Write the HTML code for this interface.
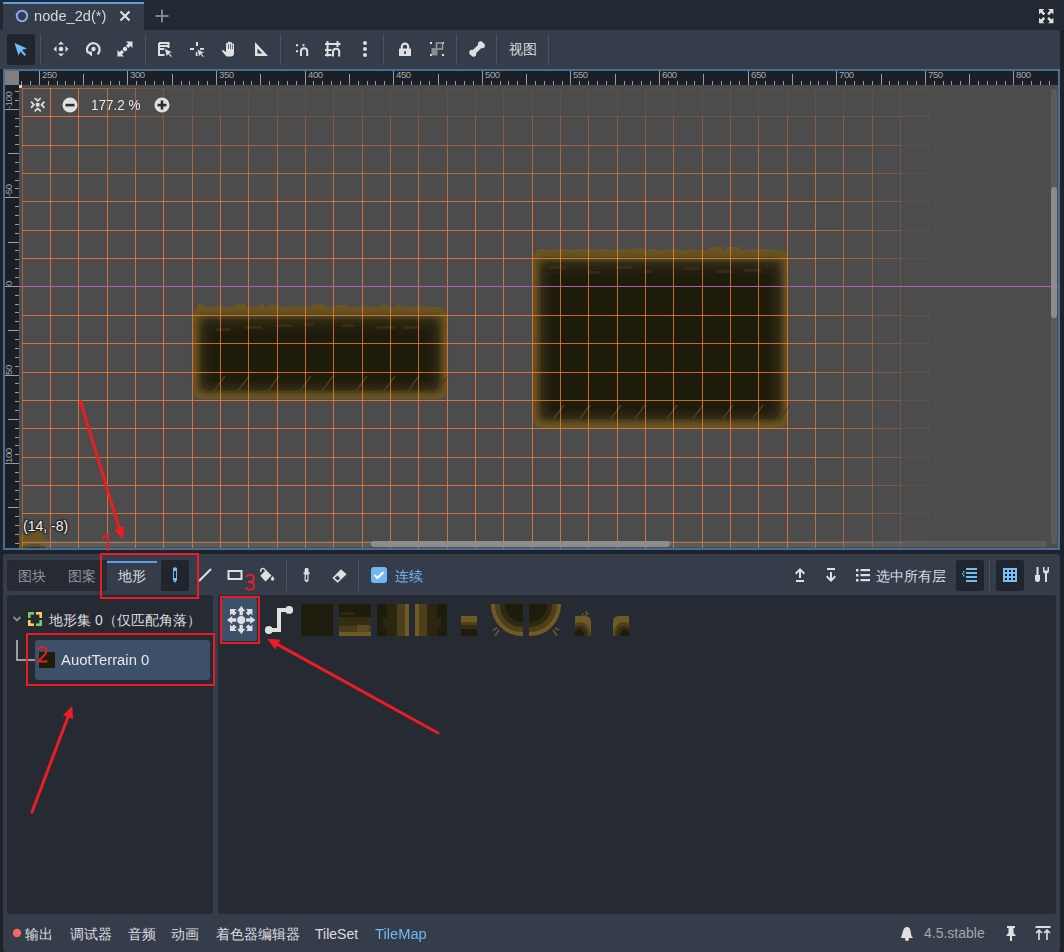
<!DOCTYPE html>
<html><head><meta charset="utf-8"><style>
html,body{margin:0;padding:0;}
body{width:1064px;height:952px;position:relative;overflow:hidden;background:#1e2229;font-family:"Liberation Sans",sans-serif;}
.t{position:absolute;white-space:nowrap;line-height:1.2;}
svg{overflow:visible}
</style></head><body>
<div style="position:absolute;left:0px;top:0px;width:1064px;height:30px;background:#232933;border-radius:0px;"></div><div style="position:absolute;left:3px;top:2px;width:141px;height:28px;background:#363d4a;border-radius:0px;"></div><div style="position:absolute;left:3px;top:2px;width:141px;height:2px;background:#5f9ee8;border-radius:0px;"></div><svg style="position:absolute;left:14px;top:8px" width="16" height="16" viewBox="0 0 16 16" ><circle cx="8" cy="8" r="5.2" fill="none" stroke="#8da5f3" stroke-width="2"/></svg><div class="t" style="left:34px;top:8px;font-size:14px;color:#d6d8db;transform:scaleX(1.045);transform-origin:0 0;">node_2d(*)</div><svg style="position:absolute;left:118px;top:9px" width="14" height="14" viewBox="0 0 14 14" ><path d="M2.5 2.5 L11.5 11.5 M11.5 2.5 L2.5 11.5" stroke="#e0e0e0" stroke-width="2" stroke-linecap="butt"/></svg><svg style="position:absolute;left:154px;top:8px" width="16" height="16" viewBox="0 0 16 16" ><path d="M8 1.5 V14.5 M1.5 8 H14.5" stroke="#808389" stroke-width="2"/></svg><svg style="position:absolute;left:1039px;top:9px" width="14" height="14" viewBox="0 0 14 14" ><g fill="#e0e0e0"><polygon points="0,0 5.4,0 3.6,1.8 6.2,4.4 4.4,6.2 1.8,3.6 0,5.4"/><polygon transform="translate(14.4,0) scale(-1,1)" points="0,0 5.4,0 3.6,1.8 6.2,4.4 4.4,6.2 1.8,3.6 0,5.4"/><polygon transform="translate(0,14.2) scale(1,-1)" points="0,0 5.4,0 3.6,1.8 6.2,4.4 4.4,6.2 1.8,3.6 0,5.4"/><polygon transform="translate(14.4,14.2) scale(-1,-1)" points="0,0 5.4,0 3.6,1.8 6.2,4.4 4.4,6.2 1.8,3.6 0,5.4"/></g></svg><div style="position:absolute;left:0px;top:30px;width:1060px;height:39px;background:#363d4a;border-radius:0px;"></div><div style="position:absolute;left:7px;top:34px;width:28px;height:31px;background:#21262e;border-radius:3px;"></div><svg style="position:absolute;left:12px;top:40px" width="18" height="18" viewBox="0 0 18 18" ><path d="M2.5 3 L15 8.5 L10 10 L14 14.5 L12.5 16 L8.5 11.5 L6.5 15.5 Z" fill="#70bdf8"/></svg><div style="position:absolute;left:40px;top:34px;width:1px;height:31px;background:#4a5161"></div><div style="position:absolute;left:145px;top:34px;width:1px;height:31px;background:#4a5161"></div><div style="position:absolute;left:280px;top:34px;width:1px;height:31px;background:#4a5161"></div><div style="position:absolute;left:383px;top:34px;width:1px;height:31px;background:#4a5161"></div><div style="position:absolute;left:456px;top:34px;width:1px;height:31px;background:#4a5161"></div><div style="position:absolute;left:496px;top:34px;width:1px;height:31px;background:#4a5161"></div><div style="position:absolute;left:548px;top:34px;width:1px;height:31px;background:#4a5161"></div><svg style="position:absolute;left:52px;top:40px" width="18" height="18" viewBox="0 0 18 18" ><g fill="#e0e0e0"><circle cx="9" cy="9" r="2.3"/><path d="M9 1.5 L12 4.5 H6 Z M9 16.5 L12 13.5 H6 Z M1.5 9 L4.5 6 V12 Z M16.5 9 L13.5 6 V12 Z"/></g></svg><svg style="position:absolute;left:84px;top:40px" width="18" height="18" viewBox="0 0 18 18" ><path d="M4.2 13.2 A6.3 6.3 0 1 1 13.5 14.2" fill="none" stroke="#e0e0e0" stroke-width="2.2"/><circle cx="9.5" cy="9" r="2.2" fill="#e0e0e0"/><path d="M2 11.5 L8 11.5 L8 16.5 Z" fill="#e0e0e0"/></svg><svg style="position:absolute;left:116px;top:40px" width="18" height="18" viewBox="0 0 18 18" ><g fill="#e0e0e0"><circle cx="9" cy="9" r="2.2"/><path d="M10 1.5 H16.5 V8 L14.4 5.9 L12.3 8 L10 5.7 L12.1 3.6 Z M8 16.5 H1.5 V10 L3.6 12.1 L5.7 10 L8 12.3 L5.9 14.4 Z"/></g></svg><svg style="position:absolute;left:156px;top:40px" width="18" height="18" viewBox="0 0 18 18" ><path d="M3 3 H12.5 V8 M3 3 V15 H8.5 M3 9 H9 M3 6 H12" fill="none" stroke="#e0e0e0" stroke-width="2"/><path d="M8.3 8.3 L17 12.2 L13.6 13.2 L16.3 16.2 L15 17.4 L12.3 14.4 L10.6 17 Z" fill="#e0e0e0" stroke="#363d4a" stroke-width="0.8"/></svg><svg style="position:absolute;left:188px;top:40px" width="18" height="18" viewBox="0 0 18 18" ><g fill="#e0e0e0"><rect x="8" y="2" width="2" height="4"/><rect x="2" y="8" width="4" height="2"/><rect x="12" y="8" width="4" height="1.8"/><rect x="7.8" y="12" width="1.8" height="4"/></g><path d="M9 9 L17 12.6 L13.8 13.6 L16.3 16.4 L15.1 17.5 L12.6 14.7 L11 17.2 Z" fill="#e0e0e0" stroke="#363d4a" stroke-width="0.8"/></svg><svg style="position:absolute;left:220px;top:40px" width="18" height="18" viewBox="0 0 18 18" ><path d="M6.5 16.5 L2 11.3 Q1.6 10 3 10 L6 12 V4 Q6 2.8 7 2.8 Q8 2.8 8 4 V9 V2.5 Q8 1.5 9 1.5 Q10 1.5 10 2.5 V9 V3 Q10 2 11 2 Q12 2 12 3 V9 V4.5 Q12 3.5 13 3.5 Q14 3.5 14 4.5 V13 Q14 16.5 11 16.5 Z" fill="#e0e0e0"/><path d="M8.5 9 V4 M10.5 9 V4 M12.5 9 V5" stroke="#363d4a" stroke-width="0.7"/></svg><svg style="position:absolute;left:252px;top:40px" width="18" height="18" viewBox="0 0 18 18" ><path d="M3 2 V16 H16 Z M5.5 8.5 V13.5 H10.5 Z" fill="#e0e0e0" fill-rule="evenodd"/></svg><svg style="position:absolute;left:292px;top:40px" width="18" height="18" viewBox="0 0 18 18" ><g fill="#e0e0e0"><rect x="4" y="4.2" width="2" height="2"/><rect x="10.5" y="4.2" width="2" height="2"/><rect x="4" y="10.2" width="2" height="2"/></g><path d="M9 16 V11.3 A3.1 3.1 0 0 1 15.2 11.3 V16" fill="none" stroke="#e0e0e0" stroke-width="2"/></svg><svg style="position:absolute;left:324px;top:40px" width="18" height="18" viewBox="0 0 18 18" ><g fill="#e0e0e0"><rect x="2.5" y="1" width="2" height="15.5"/><rect x="12.5" y="1" width="2" height="6"/><rect x="1" y="3" width="15.5" height="2"/><rect x="1" y="9" width="6.5" height="2"/><rect x="1" y="14" width="6.5" height="2"/></g><path d="M9 16.5 V11.8 A3.1 3.1 0 0 1 15.2 11.8 V16.5" fill="none" stroke="#e0e0e0" stroke-width="2"/></svg><svg style="position:absolute;left:356px;top:40px" width="18" height="18" viewBox="0 0 18 18" ><g fill="#e0e0e0"><circle cx="9" cy="3" r="2"/><circle cx="9" cy="9" r="2"/><circle cx="9" cy="15" r="2"/></g></svg><svg style="position:absolute;left:396px;top:40px" width="18" height="18" viewBox="0 0 18 18" ><path d="M5.8 9 V6.8 A3.2 3.2 0 0 1 12.2 6.8 V9" fill="none" stroke="#e0e0e0" stroke-width="2.2"/><rect x="3" y="8.5" width="12" height="7.5" rx="0.5" fill="#e0e0e0"/><rect x="8.2" y="11" width="1.6" height="3" fill="#363d4a"/></svg><svg style="position:absolute;left:428px;top:40px" width="18" height="18" viewBox="0 0 18 18" ><g fill="#e0e0e0"><rect x="2" y="2" width="2" height="2"/><rect x="14" y="2" width="2" height="2"/><rect x="2" y="14" width="2" height="2"/><rect x="14" y="14" width="2" height="2"/></g><rect x="8.5" y="3" width="6" height="6" fill="none" stroke="#9a9a9a" stroke-width="1.6"/><rect x="3.5" y="8" width="6" height="7.5" fill="#8c8c8c"/></svg><svg style="position:absolute;left:468px;top:40px" width="18" height="18" viewBox="0 0 18 18" ><g fill="#e0e0e0"><circle cx="12.6" cy="3.9" r="2.6"/><circle cx="14.3" cy="5.6" r="2.6"/><circle cx="3.9" cy="12.4" r="2.6"/><circle cx="5.6" cy="14.1" r="2.6"/><path d="M10.8 4.2 L14 7.4 L7.2 14 L4 10.8 Z"/></g></svg><div class="t" style="left:509px;top:41px;font-size:14px;color:#d8dadd;">视图</div><div style="position:absolute;left:3px;top:69px;width:1057px;height:481px;background:#486e94;border-radius:0px;"></div><div style="position:absolute;left:5px;top:71px;width:1053px;height:477px;background:#4c4c4c;border-radius:0px;"></div><svg style="position:absolute;left:0;top:0" width="1064" height="952"><defs><clipPath id="vc"><rect x="19" y="85" width="1039" height="463"/></clipPath></defs><g clip-path="url(#vc)"><defs><filter id="bl2" x="-20%" y="-20%" width="140%" height="140%"><feGaussianBlur stdDeviation="2.5"/></filter><filter id="bl3" x="-20%" y="-20%" width="140%" height="140%"><feGaussianBlur stdDeviation="3.5"/></filter></defs><g transform="translate(193,307)"><rect x="0" y="0" width="254" height="92" rx="9" fill="#6b5523"/><rect x="4" y="-3" width="7" height="5" fill="#6b5523"/><rect x="23" y="-2" width="6" height="4" fill="#6b5523"/><rect x="42" y="-3" width="11" height="5" fill="#6b5523"/><rect x="66" y="-3" width="5" height="5" fill="#6b5523"/><rect x="75" y="-2" width="11" height="4" fill="#6b5523"/><rect x="98" y="-1" width="7" height="3" fill="#6b5523"/><rect x="120" y="-3" width="11" height="5" fill="#6b5523"/><rect x="143" y="-2" width="11" height="4" fill="#6b5523"/><rect x="168" y="-1" width="6" height="3" fill="#6b5523"/><rect x="188" y="-3" width="6" height="5" fill="#6b5523"/><rect x="204" y="-3" width="4" height="5" fill="#6b5523"/><rect x="224" y="-1" width="5" height="3" fill="#6b5523"/><rect x="4" y="7" width="246" height="79" rx="7" fill="#4c3f1b" filter="url(#bl2)"/><rect x="8" y="12" width="238" height="71" rx="7" fill="#2f2912" filter="url(#bl2)"/><rect x="13" y="18" width="228" height="60" rx="6" fill="#201e0d" filter="url(#bl3)"/><rect x="18" y="24" width="218" height="50" fill="#1e1d0c"/><path d="M21 84 L32 69" stroke="#4c3f1b" stroke-width="1.5"/><path d="M45 84 L56 69" stroke="#4c3f1b" stroke-width="1.5"/><path d="M75 84 L86 69" stroke="#4c3f1b" stroke-width="1.5"/><path d="M107 84 L118 69" stroke="#4c3f1b" stroke-width="1.5"/><path d="M129 84 L140 69" stroke="#4c3f1b" stroke-width="1.5"/><path d="M163 84 L174 69" stroke="#4c3f1b" stroke-width="1.5"/><path d="M191 84 L202 69" stroke="#4c3f1b" stroke-width="1.5"/><path d="M215 84 L226 69" stroke="#4c3f1b" stroke-width="1.5"/><path d="M244 84 L255 69" stroke="#4c3f1b" stroke-width="1.5"/><rect x="23" y="21" width="14" height="3" fill="#3a3115" opacity="0.8"/><rect x="52" y="19" width="17" height="3" fill="#3a3115" opacity="0.8"/><rect x="85" y="17" width="13" height="3" fill="#3a3115" opacity="0.8"/><rect x="111" y="16" width="10" height="3" fill="#3a3115" opacity="0.8"/><rect x="149" y="17" width="12" height="3" fill="#3a3115" opacity="0.8"/><rect x="184" y="19" width="18" height="3" fill="#3a3115" opacity="0.8"/><rect x="210" y="19" width="16" height="3" fill="#3a3115" opacity="0.8"/></g><g transform="translate(533,250)"><rect x="0" y="0" width="255" height="178" rx="9" fill="#6b5523"/><rect x="4" y="-1" width="9" height="3" fill="#6b5523"/><rect x="23" y="-1" width="14" height="3" fill="#6b5523"/><rect x="42" y="-1" width="12" height="3" fill="#6b5523"/><rect x="63" y="-1" width="13" height="3" fill="#6b5523"/><rect x="88" y="-1" width="7" height="3" fill="#6b5523"/><rect x="100" y="-2" width="10" height="4" fill="#6b5523"/><rect x="115" y="-1" width="7" height="3" fill="#6b5523"/><rect x="134" y="-1" width="10" height="3" fill="#6b5523"/><rect x="157" y="-1" width="5" height="3" fill="#6b5523"/><rect x="176" y="-3" width="14" height="5" fill="#6b5523"/><rect x="194" y="-3" width="13" height="5" fill="#6b5523"/><rect x="217" y="-1" width="4" height="3" fill="#6b5523"/><rect x="225" y="-1" width="12" height="3" fill="#6b5523"/><rect x="4" y="7" width="247" height="165" rx="7" fill="#4c3f1b" filter="url(#bl2)"/><rect x="8" y="12" width="239" height="157" rx="7" fill="#2f2912" filter="url(#bl2)"/><rect x="13" y="18" width="229" height="146" rx="6" fill="#201e0d" filter="url(#bl3)"/><rect x="18" y="24" width="219" height="136" fill="#1e1d0c"/><path d="M20 170 L31 155" stroke="#4c3f1b" stroke-width="1.5"/><path d="M46 170 L57 155" stroke="#4c3f1b" stroke-width="1.5"/><path d="M77 170 L88 155" stroke="#4c3f1b" stroke-width="1.5"/><path d="M101 170 L112 155" stroke="#4c3f1b" stroke-width="1.5"/><path d="M133 170 L144 155" stroke="#4c3f1b" stroke-width="1.5"/><path d="M159 170 L170 155" stroke="#4c3f1b" stroke-width="1.5"/><path d="M189 170 L200 155" stroke="#4c3f1b" stroke-width="1.5"/><path d="M219 170 L230 155" stroke="#4c3f1b" stroke-width="1.5"/><path d="M246 170 L257 155" stroke="#4c3f1b" stroke-width="1.5"/><rect x="16" y="16" width="17" height="3" fill="#3a3115" opacity="0.8"/><rect x="55" y="21" width="11" height="3" fill="#3a3115" opacity="0.8"/><rect x="83" y="16" width="16" height="3" fill="#3a3115" opacity="0.8"/><rect x="111" y="20" width="8" height="3" fill="#3a3115" opacity="0.8"/><rect x="151" y="17" width="15" height="3" fill="#3a3115" opacity="0.8"/><rect x="184" y="20" width="14" height="3" fill="#3a3115" opacity="0.8"/><rect x="211" y="19" width="17" height="3" fill="#3a3115" opacity="0.8"/></g><polygon points="19,534.5 29,535.5 34,533.5 39,530 45.5,527 47,528.5 41.5,533 43.5,537.5 49,540.5 49.5,548 19,548" fill="#6b5523"/><ellipse cx="34" cy="549" rx="13" ry="5" fill="#45391a"/><ellipse cx="34" cy="550" rx="9" ry="3" fill="#2f2912"/><g fill="#ff8033" shape-rendering="crispEdges"><rect x="22" y="88" width="29" height="1" fill-opacity="0.500"/><rect x="22" y="116" width="29" height="1" fill-opacity="0.750"/><rect x="22" y="89" width="1" height="27" fill-opacity="0.500"/><rect x="50" y="89" width="1" height="27" fill-opacity="0.750"/><rect x="22" y="145" width="29" height="1" fill-opacity="0.746"/><rect x="22" y="117" width="1" height="28" fill-opacity="0.500"/><rect x="50" y="117" width="1" height="28" fill-opacity="0.750"/><rect x="22" y="173" width="29" height="1" fill-opacity="0.699"/><rect x="22" y="146" width="1" height="27" fill-opacity="0.492"/><rect x="50" y="146" width="1" height="27" fill-opacity="0.711"/><rect x="22" y="201" width="29" height="1" fill-opacity="0.704"/><rect x="22" y="174" width="1" height="27" fill-opacity="0.407"/><rect x="50" y="174" width="1" height="27" fill-opacity="0.649"/><rect x="22" y="230" width="29" height="1" fill-opacity="0.750"/><rect x="22" y="202" width="1" height="28" fill-opacity="0.500"/><rect x="50" y="202" width="1" height="28" fill-opacity="0.750"/><rect x="22" y="258" width="29" height="1" fill-opacity="0.750"/><rect x="22" y="231" width="1" height="27" fill-opacity="0.500"/><rect x="50" y="231" width="1" height="27" fill-opacity="0.750"/><rect x="22" y="286" width="29" height="1" fill-opacity="0.750"/><rect x="22" y="259" width="1" height="27" fill-opacity="0.500"/><rect x="50" y="259" width="1" height="27" fill-opacity="0.750"/><rect x="22" y="315" width="29" height="1" fill-opacity="0.750"/><rect x="22" y="287" width="1" height="28" fill-opacity="0.500"/><rect x="50" y="287" width="1" height="28" fill-opacity="0.750"/><rect x="22" y="343" width="29" height="1" fill-opacity="0.750"/><rect x="22" y="316" width="1" height="27" fill-opacity="0.500"/><rect x="50" y="316" width="1" height="27" fill-opacity="0.750"/><rect x="22" y="372" width="29" height="1" fill-opacity="0.750"/><rect x="22" y="344" width="1" height="28" fill-opacity="0.500"/><rect x="50" y="344" width="1" height="28" fill-opacity="0.750"/><rect x="22" y="400" width="29" height="1" fill-opacity="0.750"/><rect x="22" y="373" width="1" height="27" fill-opacity="0.500"/><rect x="50" y="373" width="1" height="27" fill-opacity="0.750"/><rect x="22" y="428" width="29" height="1" fill-opacity="0.750"/><rect x="22" y="401" width="1" height="27" fill-opacity="0.500"/><rect x="50" y="401" width="1" height="27" fill-opacity="0.750"/><rect x="22" y="457" width="29" height="1" fill-opacity="0.750"/><rect x="22" y="429" width="1" height="28" fill-opacity="0.500"/><rect x="50" y="429" width="1" height="28" fill-opacity="0.750"/><rect x="22" y="485" width="29" height="1" fill-opacity="0.750"/><rect x="22" y="458" width="1" height="27" fill-opacity="0.500"/><rect x="50" y="458" width="1" height="27" fill-opacity="0.750"/><rect x="22" y="513" width="29" height="1" fill-opacity="0.750"/><rect x="22" y="486" width="1" height="27" fill-opacity="0.500"/><rect x="50" y="486" width="1" height="27" fill-opacity="0.750"/><rect x="22" y="542" width="29" height="1" fill-opacity="0.750"/><rect x="22" y="514" width="1" height="28" fill-opacity="0.500"/><rect x="50" y="514" width="1" height="28" fill-opacity="0.750"/><rect x="22" y="570" width="29" height="1" fill-opacity="0.750"/><rect x="22" y="543" width="1" height="27" fill-opacity="0.500"/><rect x="50" y="543" width="1" height="27" fill-opacity="0.750"/><rect x="22" y="599" width="29" height="1" fill-opacity="0.500"/><rect x="22" y="571" width="1" height="28" fill-opacity="0.500"/><rect x="50" y="571" width="1" height="28" fill-opacity="0.750"/><rect x="50" y="88" width="29" height="1" fill-opacity="0.500"/><rect x="50" y="116" width="29" height="1" fill-opacity="0.750"/><rect x="78" y="89" width="1" height="27" fill-opacity="0.746"/><rect x="50" y="145" width="29" height="1" fill-opacity="0.715"/><rect x="78" y="117" width="1" height="28" fill-opacity="0.715"/><rect x="50" y="173" width="29" height="1" fill-opacity="0.663"/><rect x="78" y="146" width="1" height="27" fill-opacity="0.617"/><rect x="50" y="201" width="29" height="1" fill-opacity="0.704"/><rect x="78" y="174" width="1" height="27" fill-opacity="0.649"/><rect x="50" y="230" width="29" height="1" fill-opacity="0.750"/><rect x="78" y="202" width="1" height="28" fill-opacity="0.750"/><rect x="50" y="258" width="29" height="1" fill-opacity="0.750"/><rect x="78" y="231" width="1" height="27" fill-opacity="0.750"/><rect x="50" y="286" width="29" height="1" fill-opacity="0.750"/><rect x="78" y="259" width="1" height="27" fill-opacity="0.750"/><rect x="50" y="315" width="29" height="1" fill-opacity="0.750"/><rect x="78" y="287" width="1" height="28" fill-opacity="0.750"/><rect x="50" y="343" width="29" height="1" fill-opacity="0.750"/><rect x="78" y="316" width="1" height="27" fill-opacity="0.750"/><rect x="50" y="372" width="29" height="1" fill-opacity="0.750"/><rect x="78" y="344" width="1" height="28" fill-opacity="0.750"/><rect x="50" y="400" width="29" height="1" fill-opacity="0.750"/><rect x="78" y="373" width="1" height="27" fill-opacity="0.750"/><rect x="50" y="428" width="29" height="1" fill-opacity="0.750"/><rect x="78" y="401" width="1" height="27" fill-opacity="0.750"/><rect x="50" y="457" width="29" height="1" fill-opacity="0.750"/><rect x="78" y="429" width="1" height="28" fill-opacity="0.750"/><rect x="50" y="485" width="29" height="1" fill-opacity="0.750"/><rect x="78" y="458" width="1" height="27" fill-opacity="0.750"/><rect x="50" y="513" width="29" height="1" fill-opacity="0.750"/><rect x="78" y="486" width="1" height="27" fill-opacity="0.750"/><rect x="50" y="542" width="29" height="1" fill-opacity="0.750"/><rect x="78" y="514" width="1" height="28" fill-opacity="0.750"/><rect x="50" y="570" width="29" height="1" fill-opacity="0.750"/><rect x="78" y="543" width="1" height="27" fill-opacity="0.750"/><rect x="50" y="599" width="29" height="1" fill-opacity="0.500"/><rect x="78" y="571" width="1" height="28" fill-opacity="0.750"/><rect x="78" y="88" width="30" height="1" fill-opacity="0.492"/><rect x="78" y="116" width="30" height="1" fill-opacity="0.711"/><rect x="107" y="89" width="1" height="27" fill-opacity="0.658"/><rect x="78" y="145" width="30" height="1" fill-opacity="0.617"/><rect x="107" y="117" width="1" height="28" fill-opacity="0.591"/><rect x="78" y="173" width="30" height="1" fill-opacity="0.601"/><rect x="107" y="146" width="1" height="27" fill-opacity="0.521"/><rect x="78" y="201" width="30" height="1" fill-opacity="0.704"/><rect x="107" y="174" width="1" height="27" fill-opacity="0.649"/><rect x="78" y="230" width="30" height="1" fill-opacity="0.750"/><rect x="107" y="202" width="1" height="28" fill-opacity="0.750"/><rect x="78" y="258" width="30" height="1" fill-opacity="0.750"/><rect x="107" y="231" width="1" height="27" fill-opacity="0.750"/><rect x="78" y="286" width="30" height="1" fill-opacity="0.750"/><rect x="107" y="259" width="1" height="27" fill-opacity="0.750"/><rect x="78" y="315" width="30" height="1" fill-opacity="0.750"/><rect x="107" y="287" width="1" height="28" fill-opacity="0.750"/><rect x="78" y="343" width="30" height="1" fill-opacity="0.750"/><rect x="107" y="316" width="1" height="27" fill-opacity="0.750"/><rect x="78" y="372" width="30" height="1" fill-opacity="0.750"/><rect x="107" y="344" width="1" height="28" fill-opacity="0.750"/><rect x="78" y="400" width="30" height="1" fill-opacity="0.750"/><rect x="107" y="373" width="1" height="27" fill-opacity="0.750"/><rect x="78" y="428" width="30" height="1" fill-opacity="0.750"/><rect x="107" y="401" width="1" height="27" fill-opacity="0.750"/><rect x="78" y="457" width="30" height="1" fill-opacity="0.750"/><rect x="107" y="429" width="1" height="28" fill-opacity="0.750"/><rect x="78" y="485" width="30" height="1" fill-opacity="0.750"/><rect x="107" y="458" width="1" height="27" fill-opacity="0.750"/><rect x="78" y="513" width="30" height="1" fill-opacity="0.750"/><rect x="107" y="486" width="1" height="27" fill-opacity="0.750"/><rect x="78" y="542" width="30" height="1" fill-opacity="0.750"/><rect x="107" y="514" width="1" height="28" fill-opacity="0.750"/><rect x="78" y="570" width="30" height="1" fill-opacity="0.750"/><rect x="107" y="543" width="1" height="27" fill-opacity="0.750"/><rect x="78" y="599" width="30" height="1" fill-opacity="0.500"/><rect x="107" y="571" width="1" height="28" fill-opacity="0.750"/><rect x="107" y="88" width="29" height="1" fill-opacity="0.327"/><rect x="107" y="116" width="29" height="1" fill-opacity="0.517"/><rect x="135" y="89" width="1" height="27" fill-opacity="0.436"/><rect x="107" y="145" width="29" height="1" fill-opacity="0.489"/><rect x="135" y="117" width="1" height="28" fill-opacity="0.403"/><rect x="107" y="173" width="29" height="1" fill-opacity="0.578"/><rect x="135" y="146" width="1" height="27" fill-opacity="0.493"/><rect x="107" y="201" width="29" height="1" fill-opacity="0.704"/><rect x="135" y="174" width="1" height="27" fill-opacity="0.649"/><rect x="107" y="230" width="29" height="1" fill-opacity="0.750"/><rect x="135" y="202" width="1" height="28" fill-opacity="0.750"/><rect x="107" y="258" width="29" height="1" fill-opacity="0.750"/><rect x="135" y="231" width="1" height="27" fill-opacity="0.750"/><rect x="107" y="286" width="29" height="1" fill-opacity="0.750"/><rect x="135" y="259" width="1" height="27" fill-opacity="0.750"/><rect x="107" y="315" width="29" height="1" fill-opacity="0.750"/><rect x="135" y="287" width="1" height="28" fill-opacity="0.750"/><rect x="107" y="343" width="29" height="1" fill-opacity="0.750"/><rect x="135" y="316" width="1" height="27" fill-opacity="0.750"/><rect x="107" y="372" width="29" height="1" fill-opacity="0.750"/><rect x="135" y="344" width="1" height="28" fill-opacity="0.750"/><rect x="107" y="400" width="29" height="1" fill-opacity="0.750"/><rect x="135" y="373" width="1" height="27" fill-opacity="0.750"/><rect x="107" y="428" width="29" height="1" fill-opacity="0.750"/><rect x="135" y="401" width="1" height="27" fill-opacity="0.750"/><rect x="107" y="457" width="29" height="1" fill-opacity="0.750"/><rect x="135" y="429" width="1" height="28" fill-opacity="0.750"/><rect x="107" y="485" width="29" height="1" fill-opacity="0.750"/><rect x="135" y="458" width="1" height="27" fill-opacity="0.750"/><rect x="107" y="513" width="29" height="1" fill-opacity="0.750"/><rect x="135" y="486" width="1" height="27" fill-opacity="0.750"/><rect x="107" y="542" width="29" height="1" fill-opacity="0.750"/><rect x="135" y="514" width="1" height="28" fill-opacity="0.750"/><rect x="107" y="570" width="29" height="1" fill-opacity="0.750"/><rect x="135" y="543" width="1" height="27" fill-opacity="0.750"/><rect x="107" y="599" width="29" height="1" fill-opacity="0.500"/><rect x="135" y="571" width="1" height="28" fill-opacity="0.750"/><rect x="135" y="88" width="29" height="1" fill-opacity="0.162"/><rect x="135" y="116" width="29" height="1" fill-opacity="0.304"/><rect x="163" y="89" width="1" height="27" fill-opacity="0.204"/><rect x="135" y="145" width="29" height="1" fill-opacity="0.408"/><rect x="163" y="117" width="1" height="28" fill-opacity="0.310"/><rect x="135" y="173" width="29" height="1" fill-opacity="0.578"/><rect x="163" y="146" width="1" height="27" fill-opacity="0.493"/><rect x="135" y="201" width="29" height="1" fill-opacity="0.704"/><rect x="163" y="174" width="1" height="27" fill-opacity="0.649"/><rect x="135" y="230" width="29" height="1" fill-opacity="0.750"/><rect x="163" y="202" width="1" height="28" fill-opacity="0.750"/><rect x="135" y="258" width="29" height="1" fill-opacity="0.750"/><rect x="163" y="231" width="1" height="27" fill-opacity="0.750"/><rect x="135" y="286" width="29" height="1" fill-opacity="0.750"/><rect x="163" y="259" width="1" height="27" fill-opacity="0.750"/><rect x="135" y="315" width="29" height="1" fill-opacity="0.750"/><rect x="163" y="287" width="1" height="28" fill-opacity="0.750"/><rect x="135" y="343" width="29" height="1" fill-opacity="0.750"/><rect x="163" y="316" width="1" height="27" fill-opacity="0.750"/><rect x="135" y="372" width="29" height="1" fill-opacity="0.750"/><rect x="163" y="344" width="1" height="28" fill-opacity="0.750"/><rect x="135" y="400" width="29" height="1" fill-opacity="0.750"/><rect x="163" y="373" width="1" height="27" fill-opacity="0.750"/><rect x="135" y="428" width="29" height="1" fill-opacity="0.750"/><rect x="163" y="401" width="1" height="27" fill-opacity="0.750"/><rect x="135" y="457" width="29" height="1" fill-opacity="0.750"/><rect x="163" y="429" width="1" height="28" fill-opacity="0.750"/><rect x="135" y="485" width="29" height="1" fill-opacity="0.750"/><rect x="163" y="458" width="1" height="27" fill-opacity="0.750"/><rect x="135" y="513" width="29" height="1" fill-opacity="0.750"/><rect x="163" y="486" width="1" height="27" fill-opacity="0.750"/><rect x="135" y="542" width="29" height="1" fill-opacity="0.750"/><rect x="163" y="514" width="1" height="28" fill-opacity="0.750"/><rect x="135" y="570" width="29" height="1" fill-opacity="0.750"/><rect x="163" y="543" width="1" height="27" fill-opacity="0.750"/><rect x="135" y="599" width="29" height="1" fill-opacity="0.500"/><rect x="163" y="571" width="1" height="28" fill-opacity="0.750"/><rect x="163" y="88" width="30" height="1" fill-opacity="0.050"/><rect x="163" y="116" width="30" height="1" fill-opacity="0.211"/><rect x="192" y="89" width="1" height="27" fill-opacity="0.098"/><rect x="163" y="145" width="30" height="1" fill-opacity="0.408"/><rect x="192" y="117" width="1" height="28" fill-opacity="0.310"/><rect x="163" y="173" width="30" height="1" fill-opacity="0.578"/><rect x="192" y="146" width="1" height="27" fill-opacity="0.493"/><rect x="163" y="201" width="30" height="1" fill-opacity="0.704"/><rect x="192" y="174" width="1" height="27" fill-opacity="0.649"/><rect x="163" y="230" width="30" height="1" fill-opacity="0.750"/><rect x="192" y="202" width="1" height="28" fill-opacity="0.750"/><rect x="163" y="258" width="30" height="1" fill-opacity="0.750"/><rect x="192" y="231" width="1" height="27" fill-opacity="0.750"/><rect x="163" y="286" width="30" height="1" fill-opacity="0.750"/><rect x="192" y="259" width="1" height="27" fill-opacity="0.750"/><rect x="163" y="315" width="30" height="1" fill-opacity="0.750"/><rect x="192" y="287" width="1" height="28" fill-opacity="0.750"/><rect x="163" y="343" width="30" height="1" fill-opacity="0.750"/><rect x="192" y="316" width="1" height="27" fill-opacity="0.750"/><rect x="163" y="372" width="30" height="1" fill-opacity="0.750"/><rect x="192" y="344" width="1" height="28" fill-opacity="0.750"/><rect x="163" y="400" width="30" height="1" fill-opacity="0.750"/><rect x="192" y="373" width="1" height="27" fill-opacity="0.750"/><rect x="163" y="428" width="30" height="1" fill-opacity="0.750"/><rect x="192" y="401" width="1" height="27" fill-opacity="0.750"/><rect x="163" y="457" width="30" height="1" fill-opacity="0.750"/><rect x="192" y="429" width="1" height="28" fill-opacity="0.750"/><rect x="163" y="485" width="30" height="1" fill-opacity="0.750"/><rect x="192" y="458" width="1" height="27" fill-opacity="0.750"/><rect x="163" y="513" width="30" height="1" fill-opacity="0.750"/><rect x="192" y="486" width="1" height="27" fill-opacity="0.750"/><rect x="163" y="542" width="30" height="1" fill-opacity="0.750"/><rect x="192" y="514" width="1" height="28" fill-opacity="0.750"/><rect x="163" y="570" width="30" height="1" fill-opacity="0.750"/><rect x="192" y="543" width="1" height="27" fill-opacity="0.750"/><rect x="163" y="599" width="30" height="1" fill-opacity="0.500"/><rect x="192" y="571" width="1" height="28" fill-opacity="0.750"/><rect x="192" y="88" width="29" height="1" fill-opacity="0.050"/><rect x="192" y="116" width="29" height="1" fill-opacity="0.211"/><rect x="220" y="89" width="1" height="27" fill-opacity="0.098"/><rect x="192" y="145" width="29" height="1" fill-opacity="0.408"/><rect x="220" y="117" width="1" height="28" fill-opacity="0.310"/><rect x="192" y="173" width="29" height="1" fill-opacity="0.578"/><rect x="220" y="146" width="1" height="27" fill-opacity="0.493"/><rect x="192" y="201" width="29" height="1" fill-opacity="0.704"/><rect x="220" y="174" width="1" height="27" fill-opacity="0.649"/><rect x="192" y="230" width="29" height="1" fill-opacity="0.750"/><rect x="220" y="202" width="1" height="28" fill-opacity="0.750"/><rect x="192" y="258" width="29" height="1" fill-opacity="0.750"/><rect x="220" y="231" width="1" height="27" fill-opacity="0.750"/><rect x="192" y="286" width="29" height="1" fill-opacity="0.750"/><rect x="220" y="259" width="1" height="27" fill-opacity="0.750"/><rect x="192" y="315" width="29" height="1" fill-opacity="0.750"/><rect x="220" y="287" width="1" height="28" fill-opacity="0.750"/><rect x="192" y="343" width="29" height="1" fill-opacity="0.750"/><rect x="220" y="316" width="1" height="27" fill-opacity="0.750"/><rect x="192" y="372" width="29" height="1" fill-opacity="0.750"/><rect x="220" y="344" width="1" height="28" fill-opacity="0.750"/><rect x="192" y="400" width="29" height="1" fill-opacity="0.750"/><rect x="220" y="373" width="1" height="27" fill-opacity="0.750"/><rect x="192" y="428" width="29" height="1" fill-opacity="0.750"/><rect x="220" y="401" width="1" height="27" fill-opacity="0.750"/><rect x="192" y="457" width="29" height="1" fill-opacity="0.750"/><rect x="220" y="429" width="1" height="28" fill-opacity="0.750"/><rect x="192" y="485" width="29" height="1" fill-opacity="0.750"/><rect x="220" y="458" width="1" height="27" fill-opacity="0.750"/><rect x="192" y="513" width="29" height="1" fill-opacity="0.750"/><rect x="220" y="486" width="1" height="27" fill-opacity="0.750"/><rect x="192" y="542" width="29" height="1" fill-opacity="0.750"/><rect x="220" y="514" width="1" height="28" fill-opacity="0.750"/><rect x="192" y="570" width="29" height="1" fill-opacity="0.750"/><rect x="220" y="543" width="1" height="27" fill-opacity="0.750"/><rect x="192" y="599" width="29" height="1" fill-opacity="0.500"/><rect x="220" y="571" width="1" height="28" fill-opacity="0.750"/><rect x="220" y="88" width="29" height="1" fill-opacity="0.050"/><rect x="220" y="116" width="29" height="1" fill-opacity="0.211"/><rect x="248" y="89" width="1" height="27" fill-opacity="0.098"/><rect x="220" y="145" width="29" height="1" fill-opacity="0.408"/><rect x="248" y="117" width="1" height="28" fill-opacity="0.310"/><rect x="220" y="173" width="29" height="1" fill-opacity="0.578"/><rect x="248" y="146" width="1" height="27" fill-opacity="0.493"/><rect x="220" y="201" width="29" height="1" fill-opacity="0.704"/><rect x="248" y="174" width="1" height="27" fill-opacity="0.649"/><rect x="220" y="230" width="29" height="1" fill-opacity="0.750"/><rect x="248" y="202" width="1" height="28" fill-opacity="0.750"/><rect x="220" y="258" width="29" height="1" fill-opacity="0.750"/><rect x="248" y="231" width="1" height="27" fill-opacity="0.750"/><rect x="220" y="286" width="29" height="1" fill-opacity="0.750"/><rect x="248" y="259" width="1" height="27" fill-opacity="0.750"/><rect x="220" y="315" width="29" height="1" fill-opacity="0.750"/><rect x="248" y="287" width="1" height="28" fill-opacity="0.750"/><rect x="220" y="343" width="29" height="1" fill-opacity="0.750"/><rect x="248" y="316" width="1" height="27" fill-opacity="0.750"/><rect x="220" y="372" width="29" height="1" fill-opacity="0.750"/><rect x="248" y="344" width="1" height="28" fill-opacity="0.750"/><rect x="220" y="400" width="29" height="1" fill-opacity="0.750"/><rect x="248" y="373" width="1" height="27" fill-opacity="0.750"/><rect x="220" y="428" width="29" height="1" fill-opacity="0.750"/><rect x="248" y="401" width="1" height="27" fill-opacity="0.750"/><rect x="220" y="457" width="29" height="1" fill-opacity="0.750"/><rect x="248" y="429" width="1" height="28" fill-opacity="0.750"/><rect x="220" y="485" width="29" height="1" fill-opacity="0.750"/><rect x="248" y="458" width="1" height="27" fill-opacity="0.750"/><rect x="220" y="513" width="29" height="1" fill-opacity="0.750"/><rect x="248" y="486" width="1" height="27" fill-opacity="0.750"/><rect x="220" y="542" width="29" height="1" fill-opacity="0.750"/><rect x="248" y="514" width="1" height="28" fill-opacity="0.750"/><rect x="220" y="570" width="29" height="1" fill-opacity="0.750"/><rect x="248" y="543" width="1" height="27" fill-opacity="0.750"/><rect x="220" y="599" width="29" height="1" fill-opacity="0.500"/><rect x="248" y="571" width="1" height="28" fill-opacity="0.750"/><rect x="248" y="88" width="30" height="1" fill-opacity="0.050"/><rect x="248" y="116" width="30" height="1" fill-opacity="0.211"/><rect x="277" y="89" width="1" height="27" fill-opacity="0.098"/><rect x="248" y="145" width="30" height="1" fill-opacity="0.408"/><rect x="277" y="117" width="1" height="28" fill-opacity="0.310"/><rect x="248" y="173" width="30" height="1" fill-opacity="0.578"/><rect x="277" y="146" width="1" height="27" fill-opacity="0.493"/><rect x="248" y="201" width="30" height="1" fill-opacity="0.704"/><rect x="277" y="174" width="1" height="27" fill-opacity="0.649"/><rect x="248" y="230" width="30" height="1" fill-opacity="0.750"/><rect x="277" y="202" width="1" height="28" fill-opacity="0.750"/><rect x="248" y="258" width="30" height="1" fill-opacity="0.750"/><rect x="277" y="231" width="1" height="27" fill-opacity="0.750"/><rect x="248" y="286" width="30" height="1" fill-opacity="0.750"/><rect x="277" y="259" width="1" height="27" fill-opacity="0.750"/><rect x="248" y="315" width="30" height="1" fill-opacity="0.750"/><rect x="277" y="287" width="1" height="28" fill-opacity="0.750"/><rect x="248" y="343" width="30" height="1" fill-opacity="0.750"/><rect x="277" y="316" width="1" height="27" fill-opacity="0.750"/><rect x="248" y="372" width="30" height="1" fill-opacity="0.750"/><rect x="277" y="344" width="1" height="28" fill-opacity="0.750"/><rect x="248" y="400" width="30" height="1" fill-opacity="0.750"/><rect x="277" y="373" width="1" height="27" fill-opacity="0.750"/><rect x="248" y="428" width="30" height="1" fill-opacity="0.750"/><rect x="277" y="401" width="1" height="27" fill-opacity="0.750"/><rect x="248" y="457" width="30" height="1" fill-opacity="0.750"/><rect x="277" y="429" width="1" height="28" fill-opacity="0.750"/><rect x="248" y="485" width="30" height="1" fill-opacity="0.750"/><rect x="277" y="458" width="1" height="27" fill-opacity="0.750"/><rect x="248" y="513" width="30" height="1" fill-opacity="0.750"/><rect x="277" y="486" width="1" height="27" fill-opacity="0.750"/><rect x="248" y="542" width="30" height="1" fill-opacity="0.750"/><rect x="277" y="514" width="1" height="28" fill-opacity="0.750"/><rect x="248" y="570" width="30" height="1" fill-opacity="0.750"/><rect x="277" y="543" width="1" height="27" fill-opacity="0.750"/><rect x="248" y="599" width="30" height="1" fill-opacity="0.500"/><rect x="277" y="571" width="1" height="28" fill-opacity="0.750"/><rect x="277" y="88" width="29" height="1" fill-opacity="0.050"/><rect x="277" y="116" width="29" height="1" fill-opacity="0.211"/><rect x="305" y="89" width="1" height="27" fill-opacity="0.098"/><rect x="277" y="145" width="29" height="1" fill-opacity="0.408"/><rect x="305" y="117" width="1" height="28" fill-opacity="0.310"/><rect x="277" y="173" width="29" height="1" fill-opacity="0.578"/><rect x="305" y="146" width="1" height="27" fill-opacity="0.493"/><rect x="277" y="201" width="29" height="1" fill-opacity="0.704"/><rect x="305" y="174" width="1" height="27" fill-opacity="0.649"/><rect x="277" y="230" width="29" height="1" fill-opacity="0.750"/><rect x="305" y="202" width="1" height="28" fill-opacity="0.750"/><rect x="277" y="258" width="29" height="1" fill-opacity="0.750"/><rect x="305" y="231" width="1" height="27" fill-opacity="0.750"/><rect x="277" y="286" width="29" height="1" fill-opacity="0.750"/><rect x="305" y="259" width="1" height="27" fill-opacity="0.750"/><rect x="277" y="315" width="29" height="1" fill-opacity="0.750"/><rect x="305" y="287" width="1" height="28" fill-opacity="0.750"/><rect x="277" y="343" width="29" height="1" fill-opacity="0.750"/><rect x="305" y="316" width="1" height="27" fill-opacity="0.750"/><rect x="277" y="372" width="29" height="1" fill-opacity="0.750"/><rect x="305" y="344" width="1" height="28" fill-opacity="0.750"/><rect x="277" y="400" width="29" height="1" fill-opacity="0.750"/><rect x="305" y="373" width="1" height="27" fill-opacity="0.750"/><rect x="277" y="428" width="29" height="1" fill-opacity="0.750"/><rect x="305" y="401" width="1" height="27" fill-opacity="0.750"/><rect x="277" y="457" width="29" height="1" fill-opacity="0.750"/><rect x="305" y="429" width="1" height="28" fill-opacity="0.750"/><rect x="277" y="485" width="29" height="1" fill-opacity="0.750"/><rect x="305" y="458" width="1" height="27" fill-opacity="0.750"/><rect x="277" y="513" width="29" height="1" fill-opacity="0.750"/><rect x="305" y="486" width="1" height="27" fill-opacity="0.750"/><rect x="277" y="542" width="29" height="1" fill-opacity="0.750"/><rect x="305" y="514" width="1" height="28" fill-opacity="0.750"/><rect x="277" y="570" width="29" height="1" fill-opacity="0.750"/><rect x="305" y="543" width="1" height="27" fill-opacity="0.750"/><rect x="277" y="599" width="29" height="1" fill-opacity="0.500"/><rect x="305" y="571" width="1" height="28" fill-opacity="0.750"/><rect x="305" y="88" width="29" height="1" fill-opacity="0.050"/><rect x="305" y="116" width="29" height="1" fill-opacity="0.211"/><rect x="333" y="89" width="1" height="27" fill-opacity="0.098"/><rect x="305" y="145" width="29" height="1" fill-opacity="0.408"/><rect x="333" y="117" width="1" height="28" fill-opacity="0.310"/><rect x="305" y="173" width="29" height="1" fill-opacity="0.578"/><rect x="333" y="146" width="1" height="27" fill-opacity="0.493"/><rect x="305" y="201" width="29" height="1" fill-opacity="0.704"/><rect x="333" y="174" width="1" height="27" fill-opacity="0.649"/><rect x="305" y="230" width="29" height="1" fill-opacity="0.750"/><rect x="333" y="202" width="1" height="28" fill-opacity="0.750"/><rect x="305" y="258" width="29" height="1" fill-opacity="0.750"/><rect x="333" y="231" width="1" height="27" fill-opacity="0.750"/><rect x="305" y="286" width="29" height="1" fill-opacity="0.750"/><rect x="333" y="259" width="1" height="27" fill-opacity="0.750"/><rect x="305" y="315" width="29" height="1" fill-opacity="0.750"/><rect x="333" y="287" width="1" height="28" fill-opacity="0.750"/><rect x="305" y="343" width="29" height="1" fill-opacity="0.750"/><rect x="333" y="316" width="1" height="27" fill-opacity="0.750"/><rect x="305" y="372" width="29" height="1" fill-opacity="0.750"/><rect x="333" y="344" width="1" height="28" fill-opacity="0.750"/><rect x="305" y="400" width="29" height="1" fill-opacity="0.750"/><rect x="333" y="373" width="1" height="27" fill-opacity="0.750"/><rect x="305" y="428" width="29" height="1" fill-opacity="0.750"/><rect x="333" y="401" width="1" height="27" fill-opacity="0.750"/><rect x="305" y="457" width="29" height="1" fill-opacity="0.750"/><rect x="333" y="429" width="1" height="28" fill-opacity="0.750"/><rect x="305" y="485" width="29" height="1" fill-opacity="0.750"/><rect x="333" y="458" width="1" height="27" fill-opacity="0.750"/><rect x="305" y="513" width="29" height="1" fill-opacity="0.750"/><rect x="333" y="486" width="1" height="27" fill-opacity="0.750"/><rect x="305" y="542" width="29" height="1" fill-opacity="0.750"/><rect x="333" y="514" width="1" height="28" fill-opacity="0.750"/><rect x="305" y="570" width="29" height="1" fill-opacity="0.750"/><rect x="333" y="543" width="1" height="27" fill-opacity="0.750"/><rect x="305" y="599" width="29" height="1" fill-opacity="0.500"/><rect x="333" y="571" width="1" height="28" fill-opacity="0.750"/><rect x="333" y="88" width="30" height="1" fill-opacity="0.050"/><rect x="333" y="116" width="30" height="1" fill-opacity="0.211"/><rect x="362" y="89" width="1" height="27" fill-opacity="0.098"/><rect x="333" y="145" width="30" height="1" fill-opacity="0.408"/><rect x="362" y="117" width="1" height="28" fill-opacity="0.310"/><rect x="333" y="173" width="30" height="1" fill-opacity="0.578"/><rect x="362" y="146" width="1" height="27" fill-opacity="0.493"/><rect x="333" y="201" width="30" height="1" fill-opacity="0.704"/><rect x="362" y="174" width="1" height="27" fill-opacity="0.649"/><rect x="333" y="230" width="30" height="1" fill-opacity="0.750"/><rect x="362" y="202" width="1" height="28" fill-opacity="0.750"/><rect x="333" y="258" width="30" height="1" fill-opacity="0.750"/><rect x="362" y="231" width="1" height="27" fill-opacity="0.750"/><rect x="333" y="286" width="30" height="1" fill-opacity="0.750"/><rect x="362" y="259" width="1" height="27" fill-opacity="0.750"/><rect x="333" y="315" width="30" height="1" fill-opacity="0.750"/><rect x="362" y="287" width="1" height="28" fill-opacity="0.750"/><rect x="333" y="343" width="30" height="1" fill-opacity="0.750"/><rect x="362" y="316" width="1" height="27" fill-opacity="0.750"/><rect x="333" y="372" width="30" height="1" fill-opacity="0.750"/><rect x="362" y="344" width="1" height="28" fill-opacity="0.750"/><rect x="333" y="400" width="30" height="1" fill-opacity="0.750"/><rect x="362" y="373" width="1" height="27" fill-opacity="0.750"/><rect x="333" y="428" width="30" height="1" fill-opacity="0.750"/><rect x="362" y="401" width="1" height="27" fill-opacity="0.750"/><rect x="333" y="457" width="30" height="1" fill-opacity="0.750"/><rect x="362" y="429" width="1" height="28" fill-opacity="0.750"/><rect x="333" y="485" width="30" height="1" fill-opacity="0.750"/><rect x="362" y="458" width="1" height="27" fill-opacity="0.750"/><rect x="333" y="513" width="30" height="1" fill-opacity="0.750"/><rect x="362" y="486" width="1" height="27" fill-opacity="0.750"/><rect x="333" y="542" width="30" height="1" fill-opacity="0.750"/><rect x="362" y="514" width="1" height="28" fill-opacity="0.750"/><rect x="333" y="570" width="30" height="1" fill-opacity="0.750"/><rect x="362" y="543" width="1" height="27" fill-opacity="0.750"/><rect x="333" y="599" width="30" height="1" fill-opacity="0.500"/><rect x="362" y="571" width="1" height="28" fill-opacity="0.750"/><rect x="362" y="88" width="29" height="1" fill-opacity="0.050"/><rect x="362" y="116" width="29" height="1" fill-opacity="0.211"/><rect x="390" y="89" width="1" height="27" fill-opacity="0.098"/><rect x="362" y="145" width="29" height="1" fill-opacity="0.408"/><rect x="390" y="117" width="1" height="28" fill-opacity="0.310"/><rect x="362" y="173" width="29" height="1" fill-opacity="0.578"/><rect x="390" y="146" width="1" height="27" fill-opacity="0.493"/><rect x="362" y="201" width="29" height="1" fill-opacity="0.704"/><rect x="390" y="174" width="1" height="27" fill-opacity="0.649"/><rect x="362" y="230" width="29" height="1" fill-opacity="0.750"/><rect x="390" y="202" width="1" height="28" fill-opacity="0.750"/><rect x="362" y="258" width="29" height="1" fill-opacity="0.750"/><rect x="390" y="231" width="1" height="27" fill-opacity="0.750"/><rect x="362" y="286" width="29" height="1" fill-opacity="0.750"/><rect x="390" y="259" width="1" height="27" fill-opacity="0.750"/><rect x="362" y="315" width="29" height="1" fill-opacity="0.750"/><rect x="390" y="287" width="1" height="28" fill-opacity="0.750"/><rect x="362" y="343" width="29" height="1" fill-opacity="0.750"/><rect x="390" y="316" width="1" height="27" fill-opacity="0.750"/><rect x="362" y="372" width="29" height="1" fill-opacity="0.750"/><rect x="390" y="344" width="1" height="28" fill-opacity="0.750"/><rect x="362" y="400" width="29" height="1" fill-opacity="0.750"/><rect x="390" y="373" width="1" height="27" fill-opacity="0.750"/><rect x="362" y="428" width="29" height="1" fill-opacity="0.750"/><rect x="390" y="401" width="1" height="27" fill-opacity="0.750"/><rect x="362" y="457" width="29" height="1" fill-opacity="0.750"/><rect x="390" y="429" width="1" height="28" fill-opacity="0.750"/><rect x="362" y="485" width="29" height="1" fill-opacity="0.750"/><rect x="390" y="458" width="1" height="27" fill-opacity="0.750"/><rect x="362" y="513" width="29" height="1" fill-opacity="0.750"/><rect x="390" y="486" width="1" height="27" fill-opacity="0.750"/><rect x="362" y="542" width="29" height="1" fill-opacity="0.750"/><rect x="390" y="514" width="1" height="28" fill-opacity="0.750"/><rect x="362" y="570" width="29" height="1" fill-opacity="0.750"/><rect x="390" y="543" width="1" height="27" fill-opacity="0.750"/><rect x="362" y="599" width="29" height="1" fill-opacity="0.500"/><rect x="390" y="571" width="1" height="28" fill-opacity="0.750"/><rect x="390" y="88" width="29" height="1" fill-opacity="0.050"/><rect x="390" y="116" width="29" height="1" fill-opacity="0.211"/><rect x="418" y="89" width="1" height="27" fill-opacity="0.098"/><rect x="390" y="145" width="29" height="1" fill-opacity="0.408"/><rect x="418" y="117" width="1" height="28" fill-opacity="0.310"/><rect x="390" y="173" width="29" height="1" fill-opacity="0.578"/><rect x="418" y="146" width="1" height="27" fill-opacity="0.493"/><rect x="390" y="201" width="29" height="1" fill-opacity="0.704"/><rect x="418" y="174" width="1" height="27" fill-opacity="0.649"/><rect x="390" y="230" width="29" height="1" fill-opacity="0.750"/><rect x="418" y="202" width="1" height="28" fill-opacity="0.750"/><rect x="390" y="258" width="29" height="1" fill-opacity="0.750"/><rect x="418" y="231" width="1" height="27" fill-opacity="0.750"/><rect x="390" y="286" width="29" height="1" fill-opacity="0.750"/><rect x="418" y="259" width="1" height="27" fill-opacity="0.750"/><rect x="390" y="315" width="29" height="1" fill-opacity="0.750"/><rect x="418" y="287" width="1" height="28" fill-opacity="0.750"/><rect x="390" y="343" width="29" height="1" fill-opacity="0.750"/><rect x="418" y="316" width="1" height="27" fill-opacity="0.750"/><rect x="390" y="372" width="29" height="1" fill-opacity="0.750"/><rect x="418" y="344" width="1" height="28" fill-opacity="0.750"/><rect x="390" y="400" width="29" height="1" fill-opacity="0.750"/><rect x="418" y="373" width="1" height="27" fill-opacity="0.750"/><rect x="390" y="428" width="29" height="1" fill-opacity="0.750"/><rect x="418" y="401" width="1" height="27" fill-opacity="0.750"/><rect x="390" y="457" width="29" height="1" fill-opacity="0.750"/><rect x="418" y="429" width="1" height="28" fill-opacity="0.750"/><rect x="390" y="485" width="29" height="1" fill-opacity="0.750"/><rect x="418" y="458" width="1" height="27" fill-opacity="0.750"/><rect x="390" y="513" width="29" height="1" fill-opacity="0.750"/><rect x="418" y="486" width="1" height="27" fill-opacity="0.750"/><rect x="390" y="542" width="29" height="1" fill-opacity="0.750"/><rect x="418" y="514" width="1" height="28" fill-opacity="0.750"/><rect x="390" y="570" width="29" height="1" fill-opacity="0.750"/><rect x="418" y="543" width="1" height="27" fill-opacity="0.750"/><rect x="390" y="599" width="29" height="1" fill-opacity="0.500"/><rect x="418" y="571" width="1" height="28" fill-opacity="0.750"/><rect x="418" y="88" width="30" height="1" fill-opacity="0.050"/><rect x="418" y="116" width="30" height="1" fill-opacity="0.211"/><rect x="447" y="89" width="1" height="27" fill-opacity="0.098"/><rect x="418" y="145" width="30" height="1" fill-opacity="0.408"/><rect x="447" y="117" width="1" height="28" fill-opacity="0.310"/><rect x="418" y="173" width="30" height="1" fill-opacity="0.578"/><rect x="447" y="146" width="1" height="27" fill-opacity="0.493"/><rect x="418" y="201" width="30" height="1" fill-opacity="0.704"/><rect x="447" y="174" width="1" height="27" fill-opacity="0.649"/><rect x="418" y="230" width="30" height="1" fill-opacity="0.750"/><rect x="447" y="202" width="1" height="28" fill-opacity="0.750"/><rect x="418" y="258" width="30" height="1" fill-opacity="0.750"/><rect x="447" y="231" width="1" height="27" fill-opacity="0.750"/><rect x="418" y="286" width="30" height="1" fill-opacity="0.750"/><rect x="447" y="259" width="1" height="27" fill-opacity="0.750"/><rect x="418" y="315" width="30" height="1" fill-opacity="0.750"/><rect x="447" y="287" width="1" height="28" fill-opacity="0.750"/><rect x="418" y="343" width="30" height="1" fill-opacity="0.750"/><rect x="447" y="316" width="1" height="27" fill-opacity="0.750"/><rect x="418" y="372" width="30" height="1" fill-opacity="0.750"/><rect x="447" y="344" width="1" height="28" fill-opacity="0.750"/><rect x="418" y="400" width="30" height="1" fill-opacity="0.750"/><rect x="447" y="373" width="1" height="27" fill-opacity="0.750"/><rect x="418" y="428" width="30" height="1" fill-opacity="0.750"/><rect x="447" y="401" width="1" height="27" fill-opacity="0.750"/><rect x="418" y="457" width="30" height="1" fill-opacity="0.750"/><rect x="447" y="429" width="1" height="28" fill-opacity="0.750"/><rect x="418" y="485" width="30" height="1" fill-opacity="0.750"/><rect x="447" y="458" width="1" height="27" fill-opacity="0.750"/><rect x="418" y="513" width="30" height="1" fill-opacity="0.750"/><rect x="447" y="486" width="1" height="27" fill-opacity="0.750"/><rect x="418" y="542" width="30" height="1" fill-opacity="0.750"/><rect x="447" y="514" width="1" height="28" fill-opacity="0.750"/><rect x="418" y="570" width="30" height="1" fill-opacity="0.750"/><rect x="447" y="543" width="1" height="27" fill-opacity="0.750"/><rect x="418" y="599" width="30" height="1" fill-opacity="0.500"/><rect x="447" y="571" width="1" height="28" fill-opacity="0.750"/><rect x="447" y="88" width="29" height="1" fill-opacity="0.050"/><rect x="447" y="116" width="29" height="1" fill-opacity="0.211"/><rect x="475" y="89" width="1" height="27" fill-opacity="0.098"/><rect x="447" y="145" width="29" height="1" fill-opacity="0.408"/><rect x="475" y="117" width="1" height="28" fill-opacity="0.310"/><rect x="447" y="173" width="29" height="1" fill-opacity="0.578"/><rect x="475" y="146" width="1" height="27" fill-opacity="0.493"/><rect x="447" y="201" width="29" height="1" fill-opacity="0.704"/><rect x="475" y="174" width="1" height="27" fill-opacity="0.649"/><rect x="447" y="230" width="29" height="1" fill-opacity="0.750"/><rect x="475" y="202" width="1" height="28" fill-opacity="0.750"/><rect x="447" y="258" width="29" height="1" fill-opacity="0.750"/><rect x="475" y="231" width="1" height="27" fill-opacity="0.750"/><rect x="447" y="286" width="29" height="1" fill-opacity="0.750"/><rect x="475" y="259" width="1" height="27" fill-opacity="0.750"/><rect x="447" y="315" width="29" height="1" fill-opacity="0.750"/><rect x="475" y="287" width="1" height="28" fill-opacity="0.750"/><rect x="447" y="343" width="29" height="1" fill-opacity="0.750"/><rect x="475" y="316" width="1" height="27" fill-opacity="0.750"/><rect x="447" y="372" width="29" height="1" fill-opacity="0.750"/><rect x="475" y="344" width="1" height="28" fill-opacity="0.750"/><rect x="447" y="400" width="29" height="1" fill-opacity="0.750"/><rect x="475" y="373" width="1" height="27" fill-opacity="0.750"/><rect x="447" y="428" width="29" height="1" fill-opacity="0.750"/><rect x="475" y="401" width="1" height="27" fill-opacity="0.750"/><rect x="447" y="457" width="29" height="1" fill-opacity="0.750"/><rect x="475" y="429" width="1" height="28" fill-opacity="0.750"/><rect x="447" y="485" width="29" height="1" fill-opacity="0.750"/><rect x="475" y="458" width="1" height="27" fill-opacity="0.750"/><rect x="447" y="513" width="29" height="1" fill-opacity="0.750"/><rect x="475" y="486" width="1" height="27" fill-opacity="0.750"/><rect x="447" y="542" width="29" height="1" fill-opacity="0.750"/><rect x="475" y="514" width="1" height="28" fill-opacity="0.750"/><rect x="447" y="570" width="29" height="1" fill-opacity="0.750"/><rect x="475" y="543" width="1" height="27" fill-opacity="0.750"/><rect x="447" y="599" width="29" height="1" fill-opacity="0.500"/><rect x="475" y="571" width="1" height="28" fill-opacity="0.750"/><rect x="475" y="88" width="29" height="1" fill-opacity="0.050"/><rect x="475" y="116" width="29" height="1" fill-opacity="0.211"/><rect x="503" y="89" width="1" height="27" fill-opacity="0.098"/><rect x="475" y="145" width="29" height="1" fill-opacity="0.408"/><rect x="503" y="117" width="1" height="28" fill-opacity="0.310"/><rect x="475" y="173" width="29" height="1" fill-opacity="0.578"/><rect x="503" y="146" width="1" height="27" fill-opacity="0.493"/><rect x="475" y="201" width="29" height="1" fill-opacity="0.704"/><rect x="503" y="174" width="1" height="27" fill-opacity="0.649"/><rect x="475" y="230" width="29" height="1" fill-opacity="0.750"/><rect x="503" y="202" width="1" height="28" fill-opacity="0.750"/><rect x="475" y="258" width="29" height="1" fill-opacity="0.750"/><rect x="503" y="231" width="1" height="27" fill-opacity="0.750"/><rect x="475" y="286" width="29" height="1" fill-opacity="0.750"/><rect x="503" y="259" width="1" height="27" fill-opacity="0.750"/><rect x="475" y="315" width="29" height="1" fill-opacity="0.750"/><rect x="503" y="287" width="1" height="28" fill-opacity="0.750"/><rect x="475" y="343" width="29" height="1" fill-opacity="0.750"/><rect x="503" y="316" width="1" height="27" fill-opacity="0.750"/><rect x="475" y="372" width="29" height="1" fill-opacity="0.750"/><rect x="503" y="344" width="1" height="28" fill-opacity="0.750"/><rect x="475" y="400" width="29" height="1" fill-opacity="0.750"/><rect x="503" y="373" width="1" height="27" fill-opacity="0.750"/><rect x="475" y="428" width="29" height="1" fill-opacity="0.750"/><rect x="503" y="401" width="1" height="27" fill-opacity="0.750"/><rect x="475" y="457" width="29" height="1" fill-opacity="0.750"/><rect x="503" y="429" width="1" height="28" fill-opacity="0.750"/><rect x="475" y="485" width="29" height="1" fill-opacity="0.750"/><rect x="503" y="458" width="1" height="27" fill-opacity="0.750"/><rect x="475" y="513" width="29" height="1" fill-opacity="0.750"/><rect x="503" y="486" width="1" height="27" fill-opacity="0.750"/><rect x="475" y="542" width="29" height="1" fill-opacity="0.750"/><rect x="503" y="514" width="1" height="28" fill-opacity="0.750"/><rect x="475" y="570" width="29" height="1" fill-opacity="0.750"/><rect x="503" y="543" width="1" height="27" fill-opacity="0.750"/><rect x="475" y="599" width="29" height="1" fill-opacity="0.500"/><rect x="503" y="571" width="1" height="28" fill-opacity="0.750"/><rect x="503" y="88" width="30" height="1" fill-opacity="0.050"/><rect x="503" y="116" width="30" height="1" fill-opacity="0.211"/><rect x="532" y="89" width="1" height="27" fill-opacity="0.098"/><rect x="503" y="145" width="30" height="1" fill-opacity="0.408"/><rect x="532" y="117" width="1" height="28" fill-opacity="0.310"/><rect x="503" y="173" width="30" height="1" fill-opacity="0.578"/><rect x="532" y="146" width="1" height="27" fill-opacity="0.493"/><rect x="503" y="201" width="30" height="1" fill-opacity="0.704"/><rect x="532" y="174" width="1" height="27" fill-opacity="0.649"/><rect x="503" y="230" width="30" height="1" fill-opacity="0.750"/><rect x="532" y="202" width="1" height="28" fill-opacity="0.750"/><rect x="503" y="258" width="30" height="1" fill-opacity="0.750"/><rect x="532" y="231" width="1" height="27" fill-opacity="0.750"/><rect x="503" y="286" width="30" height="1" fill-opacity="0.750"/><rect x="532" y="259" width="1" height="27" fill-opacity="0.750"/><rect x="503" y="315" width="30" height="1" fill-opacity="0.750"/><rect x="532" y="287" width="1" height="28" fill-opacity="0.750"/><rect x="503" y="343" width="30" height="1" fill-opacity="0.750"/><rect x="532" y="316" width="1" height="27" fill-opacity="0.750"/><rect x="503" y="372" width="30" height="1" fill-opacity="0.750"/><rect x="532" y="344" width="1" height="28" fill-opacity="0.750"/><rect x="503" y="400" width="30" height="1" fill-opacity="0.750"/><rect x="532" y="373" width="1" height="27" fill-opacity="0.750"/><rect x="503" y="428" width="30" height="1" fill-opacity="0.750"/><rect x="532" y="401" width="1" height="27" fill-opacity="0.750"/><rect x="503" y="457" width="30" height="1" fill-opacity="0.750"/><rect x="532" y="429" width="1" height="28" fill-opacity="0.750"/><rect x="503" y="485" width="30" height="1" fill-opacity="0.750"/><rect x="532" y="458" width="1" height="27" fill-opacity="0.750"/><rect x="503" y="513" width="30" height="1" fill-opacity="0.750"/><rect x="532" y="486" width="1" height="27" fill-opacity="0.750"/><rect x="503" y="542" width="30" height="1" fill-opacity="0.750"/><rect x="532" y="514" width="1" height="28" fill-opacity="0.750"/><rect x="503" y="570" width="30" height="1" fill-opacity="0.750"/><rect x="532" y="543" width="1" height="27" fill-opacity="0.750"/><rect x="503" y="599" width="30" height="1" fill-opacity="0.500"/><rect x="532" y="571" width="1" height="28" fill-opacity="0.750"/><rect x="532" y="88" width="29" height="1" fill-opacity="0.050"/><rect x="532" y="116" width="29" height="1" fill-opacity="0.211"/><rect x="560" y="89" width="1" height="27" fill-opacity="0.098"/><rect x="532" y="145" width="29" height="1" fill-opacity="0.408"/><rect x="560" y="117" width="1" height="28" fill-opacity="0.310"/><rect x="532" y="173" width="29" height="1" fill-opacity="0.578"/><rect x="560" y="146" width="1" height="27" fill-opacity="0.493"/><rect x="532" y="201" width="29" height="1" fill-opacity="0.704"/><rect x="560" y="174" width="1" height="27" fill-opacity="0.649"/><rect x="532" y="230" width="29" height="1" fill-opacity="0.750"/><rect x="560" y="202" width="1" height="28" fill-opacity="0.750"/><rect x="532" y="258" width="29" height="1" fill-opacity="0.750"/><rect x="560" y="231" width="1" height="27" fill-opacity="0.750"/><rect x="532" y="286" width="29" height="1" fill-opacity="0.750"/><rect x="560" y="259" width="1" height="27" fill-opacity="0.750"/><rect x="532" y="315" width="29" height="1" fill-opacity="0.750"/><rect x="560" y="287" width="1" height="28" fill-opacity="0.750"/><rect x="532" y="343" width="29" height="1" fill-opacity="0.750"/><rect x="560" y="316" width="1" height="27" fill-opacity="0.750"/><rect x="532" y="372" width="29" height="1" fill-opacity="0.750"/><rect x="560" y="344" width="1" height="28" fill-opacity="0.750"/><rect x="532" y="400" width="29" height="1" fill-opacity="0.750"/><rect x="560" y="373" width="1" height="27" fill-opacity="0.750"/><rect x="532" y="428" width="29" height="1" fill-opacity="0.750"/><rect x="560" y="401" width="1" height="27" fill-opacity="0.750"/><rect x="532" y="457" width="29" height="1" fill-opacity="0.750"/><rect x="560" y="429" width="1" height="28" fill-opacity="0.750"/><rect x="532" y="485" width="29" height="1" fill-opacity="0.750"/><rect x="560" y="458" width="1" height="27" fill-opacity="0.750"/><rect x="532" y="513" width="29" height="1" fill-opacity="0.750"/><rect x="560" y="486" width="1" height="27" fill-opacity="0.750"/><rect x="532" y="542" width="29" height="1" fill-opacity="0.750"/><rect x="560" y="514" width="1" height="28" fill-opacity="0.750"/><rect x="532" y="570" width="29" height="1" fill-opacity="0.750"/><rect x="560" y="543" width="1" height="27" fill-opacity="0.750"/><rect x="532" y="599" width="29" height="1" fill-opacity="0.500"/><rect x="560" y="571" width="1" height="28" fill-opacity="0.750"/><rect x="560" y="88" width="29" height="1" fill-opacity="0.050"/><rect x="560" y="116" width="29" height="1" fill-opacity="0.211"/><rect x="588" y="89" width="1" height="27" fill-opacity="0.098"/><rect x="560" y="145" width="29" height="1" fill-opacity="0.408"/><rect x="588" y="117" width="1" height="28" fill-opacity="0.310"/><rect x="560" y="173" width="29" height="1" fill-opacity="0.578"/><rect x="588" y="146" width="1" height="27" fill-opacity="0.493"/><rect x="560" y="201" width="29" height="1" fill-opacity="0.704"/><rect x="588" y="174" width="1" height="27" fill-opacity="0.649"/><rect x="560" y="230" width="29" height="1" fill-opacity="0.750"/><rect x="588" y="202" width="1" height="28" fill-opacity="0.750"/><rect x="560" y="258" width="29" height="1" fill-opacity="0.750"/><rect x="588" y="231" width="1" height="27" fill-opacity="0.750"/><rect x="560" y="286" width="29" height="1" fill-opacity="0.750"/><rect x="588" y="259" width="1" height="27" fill-opacity="0.750"/><rect x="560" y="315" width="29" height="1" fill-opacity="0.750"/><rect x="588" y="287" width="1" height="28" fill-opacity="0.750"/><rect x="560" y="343" width="29" height="1" fill-opacity="0.750"/><rect x="588" y="316" width="1" height="27" fill-opacity="0.750"/><rect x="560" y="372" width="29" height="1" fill-opacity="0.750"/><rect x="588" y="344" width="1" height="28" fill-opacity="0.750"/><rect x="560" y="400" width="29" height="1" fill-opacity="0.750"/><rect x="588" y="373" width="1" height="27" fill-opacity="0.750"/><rect x="560" y="428" width="29" height="1" fill-opacity="0.750"/><rect x="588" y="401" width="1" height="27" fill-opacity="0.750"/><rect x="560" y="457" width="29" height="1" fill-opacity="0.750"/><rect x="588" y="429" width="1" height="28" fill-opacity="0.750"/><rect x="560" y="485" width="29" height="1" fill-opacity="0.750"/><rect x="588" y="458" width="1" height="27" fill-opacity="0.750"/><rect x="560" y="513" width="29" height="1" fill-opacity="0.750"/><rect x="588" y="486" width="1" height="27" fill-opacity="0.750"/><rect x="560" y="542" width="29" height="1" fill-opacity="0.750"/><rect x="588" y="514" width="1" height="28" fill-opacity="0.750"/><rect x="560" y="570" width="29" height="1" fill-opacity="0.750"/><rect x="588" y="543" width="1" height="27" fill-opacity="0.750"/><rect x="560" y="599" width="29" height="1" fill-opacity="0.500"/><rect x="588" y="571" width="1" height="28" fill-opacity="0.750"/><rect x="588" y="88" width="30" height="1" fill-opacity="0.050"/><rect x="588" y="116" width="30" height="1" fill-opacity="0.211"/><rect x="617" y="89" width="1" height="27" fill-opacity="0.098"/><rect x="588" y="145" width="30" height="1" fill-opacity="0.408"/><rect x="617" y="117" width="1" height="28" fill-opacity="0.310"/><rect x="588" y="173" width="30" height="1" fill-opacity="0.578"/><rect x="617" y="146" width="1" height="27" fill-opacity="0.493"/><rect x="588" y="201" width="30" height="1" fill-opacity="0.704"/><rect x="617" y="174" width="1" height="27" fill-opacity="0.649"/><rect x="588" y="230" width="30" height="1" fill-opacity="0.750"/><rect x="617" y="202" width="1" height="28" fill-opacity="0.750"/><rect x="588" y="258" width="30" height="1" fill-opacity="0.750"/><rect x="617" y="231" width="1" height="27" fill-opacity="0.750"/><rect x="588" y="286" width="30" height="1" fill-opacity="0.750"/><rect x="617" y="259" width="1" height="27" fill-opacity="0.750"/><rect x="588" y="315" width="30" height="1" fill-opacity="0.750"/><rect x="617" y="287" width="1" height="28" fill-opacity="0.750"/><rect x="588" y="343" width="30" height="1" fill-opacity="0.750"/><rect x="617" y="316" width="1" height="27" fill-opacity="0.750"/><rect x="588" y="372" width="30" height="1" fill-opacity="0.750"/><rect x="617" y="344" width="1" height="28" fill-opacity="0.750"/><rect x="588" y="400" width="30" height="1" fill-opacity="0.750"/><rect x="617" y="373" width="1" height="27" fill-opacity="0.750"/><rect x="588" y="428" width="30" height="1" fill-opacity="0.750"/><rect x="617" y="401" width="1" height="27" fill-opacity="0.750"/><rect x="588" y="457" width="30" height="1" fill-opacity="0.750"/><rect x="617" y="429" width="1" height="28" fill-opacity="0.750"/><rect x="588" y="485" width="30" height="1" fill-opacity="0.750"/><rect x="617" y="458" width="1" height="27" fill-opacity="0.750"/><rect x="588" y="513" width="30" height="1" fill-opacity="0.750"/><rect x="617" y="486" width="1" height="27" fill-opacity="0.750"/><rect x="588" y="542" width="30" height="1" fill-opacity="0.750"/><rect x="617" y="514" width="1" height="28" fill-opacity="0.750"/><rect x="588" y="570" width="30" height="1" fill-opacity="0.750"/><rect x="617" y="543" width="1" height="27" fill-opacity="0.750"/><rect x="588" y="599" width="30" height="1" fill-opacity="0.500"/><rect x="617" y="571" width="1" height="28" fill-opacity="0.750"/><rect x="617" y="88" width="29" height="1" fill-opacity="0.050"/><rect x="617" y="116" width="29" height="1" fill-opacity="0.211"/><rect x="645" y="89" width="1" height="27" fill-opacity="0.098"/><rect x="617" y="145" width="29" height="1" fill-opacity="0.408"/><rect x="645" y="117" width="1" height="28" fill-opacity="0.310"/><rect x="617" y="173" width="29" height="1" fill-opacity="0.578"/><rect x="645" y="146" width="1" height="27" fill-opacity="0.493"/><rect x="617" y="201" width="29" height="1" fill-opacity="0.704"/><rect x="645" y="174" width="1" height="27" fill-opacity="0.649"/><rect x="617" y="230" width="29" height="1" fill-opacity="0.750"/><rect x="645" y="202" width="1" height="28" fill-opacity="0.750"/><rect x="617" y="258" width="29" height="1" fill-opacity="0.750"/><rect x="645" y="231" width="1" height="27" fill-opacity="0.750"/><rect x="617" y="286" width="29" height="1" fill-opacity="0.750"/><rect x="645" y="259" width="1" height="27" fill-opacity="0.750"/><rect x="617" y="315" width="29" height="1" fill-opacity="0.750"/><rect x="645" y="287" width="1" height="28" fill-opacity="0.750"/><rect x="617" y="343" width="29" height="1" fill-opacity="0.750"/><rect x="645" y="316" width="1" height="27" fill-opacity="0.750"/><rect x="617" y="372" width="29" height="1" fill-opacity="0.750"/><rect x="645" y="344" width="1" height="28" fill-opacity="0.750"/><rect x="617" y="400" width="29" height="1" fill-opacity="0.750"/><rect x="645" y="373" width="1" height="27" fill-opacity="0.750"/><rect x="617" y="428" width="29" height="1" fill-opacity="0.750"/><rect x="645" y="401" width="1" height="27" fill-opacity="0.750"/><rect x="617" y="457" width="29" height="1" fill-opacity="0.750"/><rect x="645" y="429" width="1" height="28" fill-opacity="0.750"/><rect x="617" y="485" width="29" height="1" fill-opacity="0.750"/><rect x="645" y="458" width="1" height="27" fill-opacity="0.750"/><rect x="617" y="513" width="29" height="1" fill-opacity="0.750"/><rect x="645" y="486" width="1" height="27" fill-opacity="0.750"/><rect x="617" y="542" width="29" height="1" fill-opacity="0.750"/><rect x="645" y="514" width="1" height="28" fill-opacity="0.750"/><rect x="617" y="570" width="29" height="1" fill-opacity="0.750"/><rect x="645" y="543" width="1" height="27" fill-opacity="0.750"/><rect x="617" y="599" width="29" height="1" fill-opacity="0.500"/><rect x="645" y="571" width="1" height="28" fill-opacity="0.750"/><rect x="645" y="88" width="29" height="1" fill-opacity="0.050"/><rect x="645" y="116" width="29" height="1" fill-opacity="0.211"/><rect x="673" y="89" width="1" height="27" fill-opacity="0.098"/><rect x="645" y="145" width="29" height="1" fill-opacity="0.408"/><rect x="673" y="117" width="1" height="28" fill-opacity="0.310"/><rect x="645" y="173" width="29" height="1" fill-opacity="0.578"/><rect x="673" y="146" width="1" height="27" fill-opacity="0.493"/><rect x="645" y="201" width="29" height="1" fill-opacity="0.704"/><rect x="673" y="174" width="1" height="27" fill-opacity="0.649"/><rect x="645" y="230" width="29" height="1" fill-opacity="0.750"/><rect x="673" y="202" width="1" height="28" fill-opacity="0.750"/><rect x="645" y="258" width="29" height="1" fill-opacity="0.750"/><rect x="673" y="231" width="1" height="27" fill-opacity="0.750"/><rect x="645" y="286" width="29" height="1" fill-opacity="0.750"/><rect x="673" y="259" width="1" height="27" fill-opacity="0.750"/><rect x="645" y="315" width="29" height="1" fill-opacity="0.750"/><rect x="673" y="287" width="1" height="28" fill-opacity="0.750"/><rect x="645" y="343" width="29" height="1" fill-opacity="0.750"/><rect x="673" y="316" width="1" height="27" fill-opacity="0.750"/><rect x="645" y="372" width="29" height="1" fill-opacity="0.750"/><rect x="673" y="344" width="1" height="28" fill-opacity="0.750"/><rect x="645" y="400" width="29" height="1" fill-opacity="0.750"/><rect x="673" y="373" width="1" height="27" fill-opacity="0.750"/><rect x="645" y="428" width="29" height="1" fill-opacity="0.750"/><rect x="673" y="401" width="1" height="27" fill-opacity="0.750"/><rect x="645" y="457" width="29" height="1" fill-opacity="0.750"/><rect x="673" y="429" width="1" height="28" fill-opacity="0.750"/><rect x="645" y="485" width="29" height="1" fill-opacity="0.750"/><rect x="673" y="458" width="1" height="27" fill-opacity="0.750"/><rect x="645" y="513" width="29" height="1" fill-opacity="0.750"/><rect x="673" y="486" width="1" height="27" fill-opacity="0.750"/><rect x="645" y="542" width="29" height="1" fill-opacity="0.750"/><rect x="673" y="514" width="1" height="28" fill-opacity="0.750"/><rect x="645" y="570" width="29" height="1" fill-opacity="0.750"/><rect x="673" y="543" width="1" height="27" fill-opacity="0.750"/><rect x="645" y="599" width="29" height="1" fill-opacity="0.500"/><rect x="673" y="571" width="1" height="28" fill-opacity="0.750"/><rect x="673" y="88" width="30" height="1" fill-opacity="0.050"/><rect x="673" y="116" width="30" height="1" fill-opacity="0.211"/><rect x="702" y="89" width="1" height="27" fill-opacity="0.098"/><rect x="673" y="145" width="30" height="1" fill-opacity="0.408"/><rect x="702" y="117" width="1" height="28" fill-opacity="0.310"/><rect x="673" y="173" width="30" height="1" fill-opacity="0.578"/><rect x="702" y="146" width="1" height="27" fill-opacity="0.493"/><rect x="673" y="201" width="30" height="1" fill-opacity="0.704"/><rect x="702" y="174" width="1" height="27" fill-opacity="0.649"/><rect x="673" y="230" width="30" height="1" fill-opacity="0.750"/><rect x="702" y="202" width="1" height="28" fill-opacity="0.750"/><rect x="673" y="258" width="30" height="1" fill-opacity="0.750"/><rect x="702" y="231" width="1" height="27" fill-opacity="0.750"/><rect x="673" y="286" width="30" height="1" fill-opacity="0.750"/><rect x="702" y="259" width="1" height="27" fill-opacity="0.750"/><rect x="673" y="315" width="30" height="1" fill-opacity="0.750"/><rect x="702" y="287" width="1" height="28" fill-opacity="0.750"/><rect x="673" y="343" width="30" height="1" fill-opacity="0.750"/><rect x="702" y="316" width="1" height="27" fill-opacity="0.750"/><rect x="673" y="372" width="30" height="1" fill-opacity="0.750"/><rect x="702" y="344" width="1" height="28" fill-opacity="0.750"/><rect x="673" y="400" width="30" height="1" fill-opacity="0.750"/><rect x="702" y="373" width="1" height="27" fill-opacity="0.750"/><rect x="673" y="428" width="30" height="1" fill-opacity="0.750"/><rect x="702" y="401" width="1" height="27" fill-opacity="0.750"/><rect x="673" y="457" width="30" height="1" fill-opacity="0.750"/><rect x="702" y="429" width="1" height="28" fill-opacity="0.750"/><rect x="673" y="485" width="30" height="1" fill-opacity="0.750"/><rect x="702" y="458" width="1" height="27" fill-opacity="0.750"/><rect x="673" y="513" width="30" height="1" fill-opacity="0.750"/><rect x="702" y="486" width="1" height="27" fill-opacity="0.750"/><rect x="673" y="542" width="30" height="1" fill-opacity="0.750"/><rect x="702" y="514" width="1" height="28" fill-opacity="0.750"/><rect x="673" y="570" width="30" height="1" fill-opacity="0.750"/><rect x="702" y="543" width="1" height="27" fill-opacity="0.750"/><rect x="673" y="599" width="30" height="1" fill-opacity="0.500"/><rect x="702" y="571" width="1" height="28" fill-opacity="0.750"/><rect x="702" y="88" width="29" height="1" fill-opacity="0.050"/><rect x="702" y="116" width="29" height="1" fill-opacity="0.211"/><rect x="730" y="89" width="1" height="27" fill-opacity="0.098"/><rect x="702" y="145" width="29" height="1" fill-opacity="0.408"/><rect x="730" y="117" width="1" height="28" fill-opacity="0.310"/><rect x="702" y="173" width="29" height="1" fill-opacity="0.578"/><rect x="730" y="146" width="1" height="27" fill-opacity="0.493"/><rect x="702" y="201" width="29" height="1" fill-opacity="0.704"/><rect x="730" y="174" width="1" height="27" fill-opacity="0.649"/><rect x="702" y="230" width="29" height="1" fill-opacity="0.750"/><rect x="730" y="202" width="1" height="28" fill-opacity="0.750"/><rect x="702" y="258" width="29" height="1" fill-opacity="0.750"/><rect x="730" y="231" width="1" height="27" fill-opacity="0.750"/><rect x="702" y="286" width="29" height="1" fill-opacity="0.750"/><rect x="730" y="259" width="1" height="27" fill-opacity="0.750"/><rect x="702" y="315" width="29" height="1" fill-opacity="0.750"/><rect x="730" y="287" width="1" height="28" fill-opacity="0.750"/><rect x="702" y="343" width="29" height="1" fill-opacity="0.750"/><rect x="730" y="316" width="1" height="27" fill-opacity="0.750"/><rect x="702" y="372" width="29" height="1" fill-opacity="0.750"/><rect x="730" y="344" width="1" height="28" fill-opacity="0.750"/><rect x="702" y="400" width="29" height="1" fill-opacity="0.750"/><rect x="730" y="373" width="1" height="27" fill-opacity="0.750"/><rect x="702" y="428" width="29" height="1" fill-opacity="0.750"/><rect x="730" y="401" width="1" height="27" fill-opacity="0.750"/><rect x="702" y="457" width="29" height="1" fill-opacity="0.750"/><rect x="730" y="429" width="1" height="28" fill-opacity="0.750"/><rect x="702" y="485" width="29" height="1" fill-opacity="0.750"/><rect x="730" y="458" width="1" height="27" fill-opacity="0.750"/><rect x="702" y="513" width="29" height="1" fill-opacity="0.750"/><rect x="730" y="486" width="1" height="27" fill-opacity="0.750"/><rect x="702" y="542" width="29" height="1" fill-opacity="0.750"/><rect x="730" y="514" width="1" height="28" fill-opacity="0.750"/><rect x="702" y="570" width="29" height="1" fill-opacity="0.750"/><rect x="730" y="543" width="1" height="27" fill-opacity="0.750"/><rect x="702" y="599" width="29" height="1" fill-opacity="0.500"/><rect x="730" y="571" width="1" height="28" fill-opacity="0.750"/><rect x="730" y="88" width="29" height="1" fill-opacity="0.050"/><rect x="730" y="116" width="29" height="1" fill-opacity="0.211"/><rect x="758" y="89" width="1" height="27" fill-opacity="0.098"/><rect x="730" y="145" width="29" height="1" fill-opacity="0.408"/><rect x="758" y="117" width="1" height="28" fill-opacity="0.310"/><rect x="730" y="173" width="29" height="1" fill-opacity="0.578"/><rect x="758" y="146" width="1" height="27" fill-opacity="0.493"/><rect x="730" y="201" width="29" height="1" fill-opacity="0.704"/><rect x="758" y="174" width="1" height="27" fill-opacity="0.649"/><rect x="730" y="230" width="29" height="1" fill-opacity="0.750"/><rect x="758" y="202" width="1" height="28" fill-opacity="0.750"/><rect x="730" y="258" width="29" height="1" fill-opacity="0.750"/><rect x="758" y="231" width="1" height="27" fill-opacity="0.750"/><rect x="730" y="286" width="29" height="1" fill-opacity="0.750"/><rect x="758" y="259" width="1" height="27" fill-opacity="0.750"/><rect x="730" y="315" width="29" height="1" fill-opacity="0.750"/><rect x="758" y="287" width="1" height="28" fill-opacity="0.750"/><rect x="730" y="343" width="29" height="1" fill-opacity="0.750"/><rect x="758" y="316" width="1" height="27" fill-opacity="0.750"/><rect x="730" y="372" width="29" height="1" fill-opacity="0.750"/><rect x="758" y="344" width="1" height="28" fill-opacity="0.750"/><rect x="730" y="400" width="29" height="1" fill-opacity="0.750"/><rect x="758" y="373" width="1" height="27" fill-opacity="0.750"/><rect x="730" y="428" width="29" height="1" fill-opacity="0.750"/><rect x="758" y="401" width="1" height="27" fill-opacity="0.750"/><rect x="730" y="457" width="29" height="1" fill-opacity="0.750"/><rect x="758" y="429" width="1" height="28" fill-opacity="0.750"/><rect x="730" y="485" width="29" height="1" fill-opacity="0.750"/><rect x="758" y="458" width="1" height="27" fill-opacity="0.750"/><rect x="730" y="513" width="29" height="1" fill-opacity="0.750"/><rect x="758" y="486" width="1" height="27" fill-opacity="0.750"/><rect x="730" y="542" width="29" height="1" fill-opacity="0.750"/><rect x="758" y="514" width="1" height="28" fill-opacity="0.750"/><rect x="730" y="570" width="29" height="1" fill-opacity="0.750"/><rect x="758" y="543" width="1" height="27" fill-opacity="0.750"/><rect x="730" y="599" width="29" height="1" fill-opacity="0.500"/><rect x="758" y="571" width="1" height="28" fill-opacity="0.750"/><rect x="758" y="88" width="30" height="1" fill-opacity="0.050"/><rect x="758" y="116" width="30" height="1" fill-opacity="0.211"/><rect x="787" y="89" width="1" height="27" fill-opacity="0.098"/><rect x="758" y="145" width="30" height="1" fill-opacity="0.408"/><rect x="787" y="117" width="1" height="28" fill-opacity="0.310"/><rect x="758" y="173" width="30" height="1" fill-opacity="0.578"/><rect x="787" y="146" width="1" height="27" fill-opacity="0.493"/><rect x="758" y="201" width="30" height="1" fill-opacity="0.704"/><rect x="787" y="174" width="1" height="27" fill-opacity="0.649"/><rect x="758" y="230" width="30" height="1" fill-opacity="0.750"/><rect x="787" y="202" width="1" height="28" fill-opacity="0.725"/><rect x="758" y="258" width="30" height="1" fill-opacity="0.750"/><rect x="787" y="231" width="1" height="27" fill-opacity="0.725"/><rect x="758" y="286" width="30" height="1" fill-opacity="0.750"/><rect x="787" y="259" width="1" height="27" fill-opacity="0.725"/><rect x="758" y="315" width="30" height="1" fill-opacity="0.750"/><rect x="787" y="287" width="1" height="28" fill-opacity="0.725"/><rect x="758" y="343" width="30" height="1" fill-opacity="0.750"/><rect x="787" y="316" width="1" height="27" fill-opacity="0.725"/><rect x="758" y="372" width="30" height="1" fill-opacity="0.750"/><rect x="787" y="344" width="1" height="28" fill-opacity="0.725"/><rect x="758" y="400" width="30" height="1" fill-opacity="0.750"/><rect x="787" y="373" width="1" height="27" fill-opacity="0.725"/><rect x="758" y="428" width="30" height="1" fill-opacity="0.750"/><rect x="787" y="401" width="1" height="27" fill-opacity="0.725"/><rect x="758" y="457" width="30" height="1" fill-opacity="0.750"/><rect x="787" y="429" width="1" height="28" fill-opacity="0.725"/><rect x="758" y="485" width="30" height="1" fill-opacity="0.750"/><rect x="787" y="458" width="1" height="27" fill-opacity="0.725"/><rect x="758" y="513" width="30" height="1" fill-opacity="0.750"/><rect x="787" y="486" width="1" height="27" fill-opacity="0.725"/><rect x="758" y="542" width="30" height="1" fill-opacity="0.750"/><rect x="787" y="514" width="1" height="28" fill-opacity="0.725"/><rect x="758" y="570" width="30" height="1" fill-opacity="0.750"/><rect x="787" y="543" width="1" height="27" fill-opacity="0.725"/><rect x="758" y="599" width="30" height="1" fill-opacity="0.500"/><rect x="787" y="571" width="1" height="28" fill-opacity="0.725"/><rect x="787" y="88" width="29" height="1" fill-opacity="0.050"/><rect x="787" y="116" width="29" height="1" fill-opacity="0.211"/><rect x="815" y="89" width="1" height="27" fill-opacity="0.098"/><rect x="787" y="145" width="29" height="1" fill-opacity="0.408"/><rect x="815" y="117" width="1" height="28" fill-opacity="0.310"/><rect x="787" y="173" width="29" height="1" fill-opacity="0.578"/><rect x="815" y="146" width="1" height="27" fill-opacity="0.493"/><rect x="787" y="201" width="29" height="1" fill-opacity="0.674"/><rect x="815" y="174" width="1" height="27" fill-opacity="0.615"/><rect x="787" y="230" width="29" height="1" fill-opacity="0.698"/><rect x="815" y="202" width="1" height="28" fill-opacity="0.642"/><rect x="787" y="258" width="29" height="1" fill-opacity="0.698"/><rect x="815" y="231" width="1" height="27" fill-opacity="0.642"/><rect x="787" y="286" width="29" height="1" fill-opacity="0.698"/><rect x="815" y="259" width="1" height="27" fill-opacity="0.642"/><rect x="787" y="315" width="29" height="1" fill-opacity="0.698"/><rect x="815" y="287" width="1" height="28" fill-opacity="0.642"/><rect x="787" y="343" width="29" height="1" fill-opacity="0.698"/><rect x="815" y="316" width="1" height="27" fill-opacity="0.642"/><rect x="787" y="372" width="29" height="1" fill-opacity="0.698"/><rect x="815" y="344" width="1" height="28" fill-opacity="0.642"/><rect x="787" y="400" width="29" height="1" fill-opacity="0.698"/><rect x="815" y="373" width="1" height="27" fill-opacity="0.642"/><rect x="787" y="428" width="29" height="1" fill-opacity="0.698"/><rect x="815" y="401" width="1" height="27" fill-opacity="0.642"/><rect x="787" y="457" width="29" height="1" fill-opacity="0.698"/><rect x="815" y="429" width="1" height="28" fill-opacity="0.642"/><rect x="787" y="485" width="29" height="1" fill-opacity="0.698"/><rect x="815" y="458" width="1" height="27" fill-opacity="0.642"/><rect x="787" y="513" width="29" height="1" fill-opacity="0.698"/><rect x="815" y="486" width="1" height="27" fill-opacity="0.642"/><rect x="787" y="542" width="29" height="1" fill-opacity="0.698"/><rect x="815" y="514" width="1" height="28" fill-opacity="0.642"/><rect x="787" y="570" width="29" height="1" fill-opacity="0.698"/><rect x="815" y="543" width="1" height="27" fill-opacity="0.642"/><rect x="787" y="599" width="29" height="1" fill-opacity="0.450"/><rect x="815" y="571" width="1" height="28" fill-opacity="0.642"/><rect x="815" y="88" width="29" height="1" fill-opacity="0.050"/><rect x="815" y="116" width="29" height="1" fill-opacity="0.211"/><rect x="843" y="89" width="1" height="27" fill-opacity="0.098"/><rect x="815" y="145" width="29" height="1" fill-opacity="0.408"/><rect x="843" y="117" width="1" height="28" fill-opacity="0.310"/><rect x="815" y="173" width="29" height="1" fill-opacity="0.537"/><rect x="843" y="146" width="1" height="27" fill-opacity="0.466"/><rect x="815" y="201" width="29" height="1" fill-opacity="0.577"/><rect x="843" y="174" width="1" height="27" fill-opacity="0.512"/><rect x="815" y="230" width="29" height="1" fill-opacity="0.577"/><rect x="843" y="202" width="1" height="28" fill-opacity="0.512"/><rect x="815" y="258" width="29" height="1" fill-opacity="0.577"/><rect x="843" y="231" width="1" height="27" fill-opacity="0.512"/><rect x="815" y="286" width="29" height="1" fill-opacity="0.577"/><rect x="843" y="259" width="1" height="27" fill-opacity="0.512"/><rect x="815" y="315" width="29" height="1" fill-opacity="0.577"/><rect x="843" y="287" width="1" height="28" fill-opacity="0.512"/><rect x="815" y="343" width="29" height="1" fill-opacity="0.577"/><rect x="843" y="316" width="1" height="27" fill-opacity="0.512"/><rect x="815" y="372" width="29" height="1" fill-opacity="0.577"/><rect x="843" y="344" width="1" height="28" fill-opacity="0.512"/><rect x="815" y="400" width="29" height="1" fill-opacity="0.577"/><rect x="843" y="373" width="1" height="27" fill-opacity="0.512"/><rect x="815" y="428" width="29" height="1" fill-opacity="0.577"/><rect x="843" y="401" width="1" height="27" fill-opacity="0.512"/><rect x="815" y="457" width="29" height="1" fill-opacity="0.577"/><rect x="843" y="429" width="1" height="28" fill-opacity="0.512"/><rect x="815" y="485" width="29" height="1" fill-opacity="0.577"/><rect x="843" y="458" width="1" height="27" fill-opacity="0.512"/><rect x="815" y="513" width="29" height="1" fill-opacity="0.577"/><rect x="843" y="486" width="1" height="27" fill-opacity="0.512"/><rect x="815" y="542" width="29" height="1" fill-opacity="0.577"/><rect x="843" y="514" width="1" height="28" fill-opacity="0.512"/><rect x="815" y="570" width="29" height="1" fill-opacity="0.577"/><rect x="843" y="543" width="1" height="27" fill-opacity="0.512"/><rect x="815" y="599" width="29" height="1" fill-opacity="0.350"/><rect x="843" y="571" width="1" height="28" fill-opacity="0.512"/><rect x="843" y="88" width="30" height="1" fill-opacity="0.050"/><rect x="843" y="116" width="30" height="1" fill-opacity="0.211"/><rect x="872" y="89" width="1" height="27" fill-opacity="0.098"/><rect x="843" y="145" width="30" height="1" fill-opacity="0.377"/><rect x="872" y="117" width="1" height="28" fill-opacity="0.294"/><rect x="843" y="173" width="30" height="1" fill-opacity="0.438"/><rect x="872" y="146" width="1" height="27" fill-opacity="0.363"/><rect x="843" y="201" width="30" height="1" fill-opacity="0.438"/><rect x="872" y="174" width="1" height="27" fill-opacity="0.363"/><rect x="843" y="230" width="30" height="1" fill-opacity="0.438"/><rect x="872" y="202" width="1" height="28" fill-opacity="0.363"/><rect x="843" y="258" width="30" height="1" fill-opacity="0.438"/><rect x="872" y="231" width="1" height="27" fill-opacity="0.363"/><rect x="843" y="286" width="30" height="1" fill-opacity="0.438"/><rect x="872" y="259" width="1" height="27" fill-opacity="0.363"/><rect x="843" y="315" width="30" height="1" fill-opacity="0.438"/><rect x="872" y="287" width="1" height="28" fill-opacity="0.363"/><rect x="843" y="343" width="30" height="1" fill-opacity="0.438"/><rect x="872" y="316" width="1" height="27" fill-opacity="0.363"/><rect x="843" y="372" width="30" height="1" fill-opacity="0.438"/><rect x="872" y="344" width="1" height="28" fill-opacity="0.363"/><rect x="843" y="400" width="30" height="1" fill-opacity="0.438"/><rect x="872" y="373" width="1" height="27" fill-opacity="0.363"/><rect x="843" y="428" width="30" height="1" fill-opacity="0.438"/><rect x="872" y="401" width="1" height="27" fill-opacity="0.363"/><rect x="843" y="457" width="30" height="1" fill-opacity="0.438"/><rect x="872" y="429" width="1" height="28" fill-opacity="0.363"/><rect x="843" y="485" width="30" height="1" fill-opacity="0.438"/><rect x="872" y="458" width="1" height="27" fill-opacity="0.363"/><rect x="843" y="513" width="30" height="1" fill-opacity="0.438"/><rect x="872" y="486" width="1" height="27" fill-opacity="0.363"/><rect x="843" y="542" width="30" height="1" fill-opacity="0.438"/><rect x="872" y="514" width="1" height="28" fill-opacity="0.363"/><rect x="843" y="570" width="30" height="1" fill-opacity="0.438"/><rect x="872" y="543" width="1" height="27" fill-opacity="0.363"/><rect x="843" y="599" width="30" height="1" fill-opacity="0.250"/><rect x="872" y="571" width="1" height="28" fill-opacity="0.363"/><rect x="872" y="88" width="29" height="1" fill-opacity="0.050"/><rect x="872" y="116" width="29" height="1" fill-opacity="0.193"/><rect x="900" y="89" width="1" height="27" fill-opacity="0.098"/><rect x="872" y="145" width="29" height="1" fill-opacity="0.278"/><rect x="900" y="117" width="1" height="28" fill-opacity="0.193"/><rect x="872" y="173" width="29" height="1" fill-opacity="0.278"/><rect x="900" y="146" width="1" height="27" fill-opacity="0.193"/><rect x="872" y="201" width="29" height="1" fill-opacity="0.278"/><rect x="900" y="174" width="1" height="27" fill-opacity="0.193"/><rect x="872" y="230" width="29" height="1" fill-opacity="0.278"/><rect x="900" y="202" width="1" height="28" fill-opacity="0.193"/><rect x="872" y="258" width="29" height="1" fill-opacity="0.278"/><rect x="900" y="231" width="1" height="27" fill-opacity="0.193"/><rect x="872" y="286" width="29" height="1" fill-opacity="0.278"/><rect x="900" y="259" width="1" height="27" fill-opacity="0.193"/><rect x="872" y="315" width="29" height="1" fill-opacity="0.278"/><rect x="900" y="287" width="1" height="28" fill-opacity="0.193"/><rect x="872" y="343" width="29" height="1" fill-opacity="0.278"/><rect x="900" y="316" width="1" height="27" fill-opacity="0.193"/><rect x="872" y="372" width="29" height="1" fill-opacity="0.278"/><rect x="900" y="344" width="1" height="28" fill-opacity="0.193"/><rect x="872" y="400" width="29" height="1" fill-opacity="0.278"/><rect x="900" y="373" width="1" height="27" fill-opacity="0.193"/><rect x="872" y="428" width="29" height="1" fill-opacity="0.278"/><rect x="900" y="401" width="1" height="27" fill-opacity="0.193"/><rect x="872" y="457" width="29" height="1" fill-opacity="0.278"/><rect x="900" y="429" width="1" height="28" fill-opacity="0.193"/><rect x="872" y="485" width="29" height="1" fill-opacity="0.278"/><rect x="900" y="458" width="1" height="27" fill-opacity="0.193"/><rect x="872" y="513" width="29" height="1" fill-opacity="0.278"/><rect x="900" y="486" width="1" height="27" fill-opacity="0.193"/><rect x="872" y="542" width="29" height="1" fill-opacity="0.278"/><rect x="900" y="514" width="1" height="28" fill-opacity="0.193"/><rect x="872" y="570" width="29" height="1" fill-opacity="0.278"/><rect x="900" y="543" width="1" height="27" fill-opacity="0.193"/><rect x="872" y="599" width="29" height="1" fill-opacity="0.150"/><rect x="900" y="571" width="1" height="28" fill-opacity="0.193"/><rect x="900" y="88" width="29" height="1" fill-opacity="0.050"/><rect x="900" y="116" width="29" height="1" fill-opacity="0.098"/><rect x="928" y="89" width="1" height="27" fill-opacity="0.050"/><rect x="900" y="145" width="29" height="1" fill-opacity="0.098"/><rect x="928" y="117" width="1" height="28" fill-opacity="0.050"/><rect x="900" y="173" width="29" height="1" fill-opacity="0.098"/><rect x="928" y="146" width="1" height="27" fill-opacity="0.050"/><rect x="900" y="201" width="29" height="1" fill-opacity="0.098"/><rect x="928" y="174" width="1" height="27" fill-opacity="0.050"/><rect x="900" y="230" width="29" height="1" fill-opacity="0.098"/><rect x="928" y="202" width="1" height="28" fill-opacity="0.050"/><rect x="900" y="258" width="29" height="1" fill-opacity="0.098"/><rect x="928" y="231" width="1" height="27" fill-opacity="0.050"/><rect x="900" y="286" width="29" height="1" fill-opacity="0.098"/><rect x="928" y="259" width="1" height="27" fill-opacity="0.050"/><rect x="900" y="315" width="29" height="1" fill-opacity="0.098"/><rect x="928" y="287" width="1" height="28" fill-opacity="0.050"/><rect x="900" y="343" width="29" height="1" fill-opacity="0.098"/><rect x="928" y="316" width="1" height="27" fill-opacity="0.050"/><rect x="900" y="372" width="29" height="1" fill-opacity="0.098"/><rect x="928" y="344" width="1" height="28" fill-opacity="0.050"/><rect x="900" y="400" width="29" height="1" fill-opacity="0.098"/><rect x="928" y="373" width="1" height="27" fill-opacity="0.050"/><rect x="900" y="428" width="29" height="1" fill-opacity="0.098"/><rect x="928" y="401" width="1" height="27" fill-opacity="0.050"/><rect x="900" y="457" width="29" height="1" fill-opacity="0.098"/><rect x="928" y="429" width="1" height="28" fill-opacity="0.050"/><rect x="900" y="485" width="29" height="1" fill-opacity="0.098"/><rect x="928" y="458" width="1" height="27" fill-opacity="0.050"/><rect x="900" y="513" width="29" height="1" fill-opacity="0.098"/><rect x="928" y="486" width="1" height="27" fill-opacity="0.050"/><rect x="900" y="542" width="29" height="1" fill-opacity="0.098"/><rect x="928" y="514" width="1" height="28" fill-opacity="0.050"/><rect x="900" y="570" width="29" height="1" fill-opacity="0.098"/><rect x="928" y="543" width="1" height="27" fill-opacity="0.050"/><rect x="900" y="599" width="29" height="1" fill-opacity="0.050"/><rect x="928" y="571" width="1" height="28" fill-opacity="0.050"/></g><line x1="19" y1="286.5" x2="1058" y2="286.5" stroke="#b45cb4" stroke-width="1"/></g></svg><div style="position:absolute;left:5px;top:71px;width:1053px;height:14px;background:#1b1f26;border-radius:0px;"></div><div style="position:absolute;left:5px;top:85px;width:14px;height:463px;background:#1b1f26;border-radius:0px;"></div><div style="position:absolute;left:5px;top:71px;width:14px;height:14px;background:#808080;border-radius:0px;"></div><svg style="position:absolute;left:0;top:0" width="1064" height="952"><line x1="21.5" y1="81" x2="21.5" y2="85" stroke="#9c9c9c"/><line x1="30.5" y1="81" x2="30.5" y2="85" stroke="#9c9c9c"/><line x1="39.5" y1="71" x2="39.5" y2="85" stroke="#9c9c9c"/><text x="42.0" y="78.3" font-size="9.6" letter-spacing="-0.45" fill="#a8a8a8" font-family="Liberation Sans, sans-serif">250</text><line x1="48.5" y1="81" x2="48.5" y2="85" stroke="#9c9c9c"/><line x1="57.5" y1="81" x2="57.5" y2="85" stroke="#9c9c9c"/><line x1="65.5" y1="81" x2="65.5" y2="85" stroke="#9c9c9c"/><line x1="74.5" y1="81" x2="74.5" y2="85" stroke="#9c9c9c"/><line x1="83.5" y1="74" x2="83.5" y2="85" stroke="#9c9c9c"/><line x1="92.5" y1="81" x2="92.5" y2="85" stroke="#9c9c9c"/><line x1="101.5" y1="81" x2="101.5" y2="85" stroke="#9c9c9c"/><line x1="110.5" y1="81" x2="110.5" y2="85" stroke="#9c9c9c"/><line x1="119.5" y1="81" x2="119.5" y2="85" stroke="#9c9c9c"/><line x1="127.5" y1="71" x2="127.5" y2="85" stroke="#9c9c9c"/><text x="130.0" y="78.3" font-size="9.6" letter-spacing="-0.45" fill="#a8a8a8" font-family="Liberation Sans, sans-serif">300</text><line x1="136.5" y1="81" x2="136.5" y2="85" stroke="#9c9c9c"/><line x1="145.5" y1="81" x2="145.5" y2="85" stroke="#9c9c9c"/><line x1="154.5" y1="81" x2="154.5" y2="85" stroke="#9c9c9c"/><line x1="163.5" y1="81" x2="163.5" y2="85" stroke="#9c9c9c"/><line x1="172.5" y1="74" x2="172.5" y2="85" stroke="#9c9c9c"/><line x1="181.5" y1="81" x2="181.5" y2="85" stroke="#9c9c9c"/><line x1="189.5" y1="81" x2="189.5" y2="85" stroke="#9c9c9c"/><line x1="198.5" y1="81" x2="198.5" y2="85" stroke="#9c9c9c"/><line x1="207.5" y1="81" x2="207.5" y2="85" stroke="#9c9c9c"/><line x1="216.5" y1="71" x2="216.5" y2="85" stroke="#9c9c9c"/><text x="219.0" y="78.3" font-size="9.6" letter-spacing="-0.45" fill="#a8a8a8" font-family="Liberation Sans, sans-serif">350</text><line x1="225.5" y1="81" x2="225.5" y2="85" stroke="#9c9c9c"/><line x1="234.5" y1="81" x2="234.5" y2="85" stroke="#9c9c9c"/><line x1="243.5" y1="81" x2="243.5" y2="85" stroke="#9c9c9c"/><line x1="251.5" y1="81" x2="251.5" y2="85" stroke="#9c9c9c"/><line x1="260.5" y1="74" x2="260.5" y2="85" stroke="#9c9c9c"/><line x1="269.5" y1="81" x2="269.5" y2="85" stroke="#9c9c9c"/><line x1="278.5" y1="81" x2="278.5" y2="85" stroke="#9c9c9c"/><line x1="287.5" y1="81" x2="287.5" y2="85" stroke="#9c9c9c"/><line x1="296.5" y1="81" x2="296.5" y2="85" stroke="#9c9c9c"/><line x1="305.5" y1="71" x2="305.5" y2="85" stroke="#9c9c9c"/><text x="308.0" y="78.3" font-size="9.6" letter-spacing="-0.45" fill="#a8a8a8" font-family="Liberation Sans, sans-serif">400</text><line x1="313.5" y1="81" x2="313.5" y2="85" stroke="#9c9c9c"/><line x1="322.5" y1="81" x2="322.5" y2="85" stroke="#9c9c9c"/><line x1="331.5" y1="81" x2="331.5" y2="85" stroke="#9c9c9c"/><line x1="340.5" y1="81" x2="340.5" y2="85" stroke="#9c9c9c"/><line x1="349.5" y1="74" x2="349.5" y2="85" stroke="#9c9c9c"/><line x1="358.5" y1="81" x2="358.5" y2="85" stroke="#9c9c9c"/><line x1="367.5" y1="81" x2="367.5" y2="85" stroke="#9c9c9c"/><line x1="375.5" y1="81" x2="375.5" y2="85" stroke="#9c9c9c"/><line x1="384.5" y1="81" x2="384.5" y2="85" stroke="#9c9c9c"/><line x1="393.5" y1="71" x2="393.5" y2="85" stroke="#9c9c9c"/><text x="396.0" y="78.3" font-size="9.6" letter-spacing="-0.45" fill="#a8a8a8" font-family="Liberation Sans, sans-serif">450</text><line x1="402.5" y1="81" x2="402.5" y2="85" stroke="#9c9c9c"/><line x1="411.5" y1="81" x2="411.5" y2="85" stroke="#9c9c9c"/><line x1="420.5" y1="81" x2="420.5" y2="85" stroke="#9c9c9c"/><line x1="429.5" y1="81" x2="429.5" y2="85" stroke="#9c9c9c"/><line x1="438.5" y1="74" x2="438.5" y2="85" stroke="#9c9c9c"/><line x1="446.5" y1="81" x2="446.5" y2="85" stroke="#9c9c9c"/><line x1="455.5" y1="81" x2="455.5" y2="85" stroke="#9c9c9c"/><line x1="464.5" y1="81" x2="464.5" y2="85" stroke="#9c9c9c"/><line x1="473.5" y1="81" x2="473.5" y2="85" stroke="#9c9c9c"/><line x1="482.5" y1="71" x2="482.5" y2="85" stroke="#9c9c9c"/><text x="485.0" y="78.3" font-size="9.6" letter-spacing="-0.45" fill="#a8a8a8" font-family="Liberation Sans, sans-serif">500</text><line x1="491.5" y1="81" x2="491.5" y2="85" stroke="#9c9c9c"/><line x1="500.5" y1="81" x2="500.5" y2="85" stroke="#9c9c9c"/><line x1="508.5" y1="81" x2="508.5" y2="85" stroke="#9c9c9c"/><line x1="517.5" y1="81" x2="517.5" y2="85" stroke="#9c9c9c"/><line x1="526.5" y1="74" x2="526.5" y2="85" stroke="#9c9c9c"/><line x1="535.5" y1="81" x2="535.5" y2="85" stroke="#9c9c9c"/><line x1="544.5" y1="81" x2="544.5" y2="85" stroke="#9c9c9c"/><line x1="553.5" y1="81" x2="553.5" y2="85" stroke="#9c9c9c"/><line x1="562.5" y1="81" x2="562.5" y2="85" stroke="#9c9c9c"/><line x1="570.5" y1="71" x2="570.5" y2="85" stroke="#9c9c9c"/><text x="573.0" y="78.3" font-size="9.6" letter-spacing="-0.45" fill="#a8a8a8" font-family="Liberation Sans, sans-serif">550</text><line x1="579.5" y1="81" x2="579.5" y2="85" stroke="#9c9c9c"/><line x1="588.5" y1="81" x2="588.5" y2="85" stroke="#9c9c9c"/><line x1="597.5" y1="81" x2="597.5" y2="85" stroke="#9c9c9c"/><line x1="606.5" y1="81" x2="606.5" y2="85" stroke="#9c9c9c"/><line x1="615.5" y1="74" x2="615.5" y2="85" stroke="#9c9c9c"/><line x1="624.5" y1="81" x2="624.5" y2="85" stroke="#9c9c9c"/><line x1="632.5" y1="81" x2="632.5" y2="85" stroke="#9c9c9c"/><line x1="641.5" y1="81" x2="641.5" y2="85" stroke="#9c9c9c"/><line x1="650.5" y1="81" x2="650.5" y2="85" stroke="#9c9c9c"/><line x1="659.5" y1="71" x2="659.5" y2="85" stroke="#9c9c9c"/><text x="662.0" y="78.3" font-size="9.6" letter-spacing="-0.45" fill="#a8a8a8" font-family="Liberation Sans, sans-serif">600</text><line x1="668.5" y1="81" x2="668.5" y2="85" stroke="#9c9c9c"/><line x1="677.5" y1="81" x2="677.5" y2="85" stroke="#9c9c9c"/><line x1="686.5" y1="81" x2="686.5" y2="85" stroke="#9c9c9c"/><line x1="694.5" y1="81" x2="694.5" y2="85" stroke="#9c9c9c"/><line x1="703.5" y1="74" x2="703.5" y2="85" stroke="#9c9c9c"/><line x1="712.5" y1="81" x2="712.5" y2="85" stroke="#9c9c9c"/><line x1="721.5" y1="81" x2="721.5" y2="85" stroke="#9c9c9c"/><line x1="730.5" y1="81" x2="730.5" y2="85" stroke="#9c9c9c"/><line x1="739.5" y1="81" x2="739.5" y2="85" stroke="#9c9c9c"/><line x1="748.5" y1="71" x2="748.5" y2="85" stroke="#9c9c9c"/><text x="751.0" y="78.3" font-size="9.6" letter-spacing="-0.45" fill="#a8a8a8" font-family="Liberation Sans, sans-serif">650</text><line x1="756.5" y1="81" x2="756.5" y2="85" stroke="#9c9c9c"/><line x1="765.5" y1="81" x2="765.5" y2="85" stroke="#9c9c9c"/><line x1="774.5" y1="81" x2="774.5" y2="85" stroke="#9c9c9c"/><line x1="783.5" y1="81" x2="783.5" y2="85" stroke="#9c9c9c"/><line x1="792.5" y1="74" x2="792.5" y2="85" stroke="#9c9c9c"/><line x1="801.5" y1="81" x2="801.5" y2="85" stroke="#9c9c9c"/><line x1="810.5" y1="81" x2="810.5" y2="85" stroke="#9c9c9c"/><line x1="818.5" y1="81" x2="818.5" y2="85" stroke="#9c9c9c"/><line x1="827.5" y1="81" x2="827.5" y2="85" stroke="#9c9c9c"/><line x1="836.5" y1="71" x2="836.5" y2="85" stroke="#9c9c9c"/><text x="839.0" y="78.3" font-size="9.6" letter-spacing="-0.45" fill="#a8a8a8" font-family="Liberation Sans, sans-serif">700</text><line x1="845.5" y1="81" x2="845.5" y2="85" stroke="#9c9c9c"/><line x1="854.5" y1="81" x2="854.5" y2="85" stroke="#9c9c9c"/><line x1="863.5" y1="81" x2="863.5" y2="85" stroke="#9c9c9c"/><line x1="872.5" y1="81" x2="872.5" y2="85" stroke="#9c9c9c"/><line x1="881.5" y1="74" x2="881.5" y2="85" stroke="#9c9c9c"/><line x1="889.5" y1="81" x2="889.5" y2="85" stroke="#9c9c9c"/><line x1="898.5" y1="81" x2="898.5" y2="85" stroke="#9c9c9c"/><line x1="907.5" y1="81" x2="907.5" y2="85" stroke="#9c9c9c"/><line x1="916.5" y1="81" x2="916.5" y2="85" stroke="#9c9c9c"/><line x1="925.5" y1="71" x2="925.5" y2="85" stroke="#9c9c9c"/><text x="928.0" y="78.3" font-size="9.6" letter-spacing="-0.45" fill="#a8a8a8" font-family="Liberation Sans, sans-serif">750</text><line x1="934.5" y1="81" x2="934.5" y2="85" stroke="#9c9c9c"/><line x1="943.5" y1="81" x2="943.5" y2="85" stroke="#9c9c9c"/><line x1="951.5" y1="81" x2="951.5" y2="85" stroke="#9c9c9c"/><line x1="960.5" y1="81" x2="960.5" y2="85" stroke="#9c9c9c"/><line x1="969.5" y1="74" x2="969.5" y2="85" stroke="#9c9c9c"/><line x1="978.5" y1="81" x2="978.5" y2="85" stroke="#9c9c9c"/><line x1="987.5" y1="81" x2="987.5" y2="85" stroke="#9c9c9c"/><line x1="996.5" y1="81" x2="996.5" y2="85" stroke="#9c9c9c"/><line x1="1005.5" y1="81" x2="1005.5" y2="85" stroke="#9c9c9c"/><line x1="1013.5" y1="71" x2="1013.5" y2="85" stroke="#9c9c9c"/><text x="1016.0" y="78.3" font-size="9.6" letter-spacing="-0.45" fill="#a8a8a8" font-family="Liberation Sans, sans-serif">800</text><line x1="1022.5" y1="81" x2="1022.5" y2="85" stroke="#9c9c9c"/><line x1="1031.5" y1="81" x2="1031.5" y2="85" stroke="#9c9c9c"/><line x1="1040.5" y1="81" x2="1040.5" y2="85" stroke="#9c9c9c"/><line x1="1049.5" y1="81" x2="1049.5" y2="85" stroke="#9c9c9c"/><line x1="15" y1="91.5" x2="19" y2="91.5" stroke="#9c9c9c"/><line x1="15" y1="100.5" x2="19" y2="100.5" stroke="#9c9c9c"/><line x1="5" y1="109.5" x2="19" y2="109.5" stroke="#9c9c9c"/><text transform="translate(11.6,109.0) rotate(-90)" font-size="9.6" letter-spacing="-0.45" fill="#a8a8a8" font-family="Liberation Sans, sans-serif">-100</text><line x1="15" y1="118.5" x2="19" y2="118.5" stroke="#9c9c9c"/><line x1="15" y1="126.5" x2="19" y2="126.5" stroke="#9c9c9c"/><line x1="15" y1="135.5" x2="19" y2="135.5" stroke="#9c9c9c"/><line x1="15" y1="144.5" x2="19" y2="144.5" stroke="#9c9c9c"/><line x1="8" y1="153.5" x2="19" y2="153.5" stroke="#9c9c9c"/><line x1="15" y1="162.5" x2="19" y2="162.5" stroke="#9c9c9c"/><line x1="15" y1="171.5" x2="19" y2="171.5" stroke="#9c9c9c"/><line x1="15" y1="180.5" x2="19" y2="180.5" stroke="#9c9c9c"/><line x1="15" y1="188.5" x2="19" y2="188.5" stroke="#9c9c9c"/><line x1="5" y1="197.5" x2="19" y2="197.5" stroke="#9c9c9c"/><text transform="translate(11.6,197.0) rotate(-90)" font-size="9.6" letter-spacing="-0.45" fill="#a8a8a8" font-family="Liberation Sans, sans-serif">-50</text><line x1="15" y1="206.5" x2="19" y2="206.5" stroke="#9c9c9c"/><line x1="15" y1="215.5" x2="19" y2="215.5" stroke="#9c9c9c"/><line x1="15" y1="224.5" x2="19" y2="224.5" stroke="#9c9c9c"/><line x1="15" y1="233.5" x2="19" y2="233.5" stroke="#9c9c9c"/><line x1="8" y1="242.5" x2="19" y2="242.5" stroke="#9c9c9c"/><line x1="15" y1="250.5" x2="19" y2="250.5" stroke="#9c9c9c"/><line x1="15" y1="259.5" x2="19" y2="259.5" stroke="#9c9c9c"/><line x1="15" y1="268.5" x2="19" y2="268.5" stroke="#9c9c9c"/><line x1="15" y1="277.5" x2="19" y2="277.5" stroke="#9c9c9c"/><line x1="5" y1="286.5" x2="19" y2="286.5" stroke="#9c9c9c"/><text transform="translate(11.6,286.0) rotate(-90)" font-size="9.6" letter-spacing="-0.45" fill="#a8a8a8" font-family="Liberation Sans, sans-serif">0</text><line x1="15" y1="295.5" x2="19" y2="295.5" stroke="#9c9c9c"/><line x1="15" y1="304.5" x2="19" y2="304.5" stroke="#9c9c9c"/><line x1="15" y1="312.5" x2="19" y2="312.5" stroke="#9c9c9c"/><line x1="15" y1="321.5" x2="19" y2="321.5" stroke="#9c9c9c"/><line x1="8" y1="330.5" x2="19" y2="330.5" stroke="#9c9c9c"/><line x1="15" y1="339.5" x2="19" y2="339.5" stroke="#9c9c9c"/><line x1="15" y1="348.5" x2="19" y2="348.5" stroke="#9c9c9c"/><line x1="15" y1="357.5" x2="19" y2="357.5" stroke="#9c9c9c"/><line x1="15" y1="366.5" x2="19" y2="366.5" stroke="#9c9c9c"/><line x1="5" y1="375.5" x2="19" y2="375.5" stroke="#9c9c9c"/><text transform="translate(11.6,375.0) rotate(-90)" font-size="9.6" letter-spacing="-0.45" fill="#a8a8a8" font-family="Liberation Sans, sans-serif">50</text><line x1="15" y1="383.5" x2="19" y2="383.5" stroke="#9c9c9c"/><line x1="15" y1="392.5" x2="19" y2="392.5" stroke="#9c9c9c"/><line x1="15" y1="401.5" x2="19" y2="401.5" stroke="#9c9c9c"/><line x1="15" y1="410.5" x2="19" y2="410.5" stroke="#9c9c9c"/><line x1="8" y1="419.5" x2="19" y2="419.5" stroke="#9c9c9c"/><line x1="15" y1="428.5" x2="19" y2="428.5" stroke="#9c9c9c"/><line x1="15" y1="437.5" x2="19" y2="437.5" stroke="#9c9c9c"/><line x1="15" y1="445.5" x2="19" y2="445.5" stroke="#9c9c9c"/><line x1="15" y1="454.5" x2="19" y2="454.5" stroke="#9c9c9c"/><line x1="5" y1="463.5" x2="19" y2="463.5" stroke="#9c9c9c"/><text transform="translate(11.6,463.0) rotate(-90)" font-size="9.6" letter-spacing="-0.45" fill="#a8a8a8" font-family="Liberation Sans, sans-serif">100</text><line x1="15" y1="472.5" x2="19" y2="472.5" stroke="#9c9c9c"/><line x1="15" y1="481.5" x2="19" y2="481.5" stroke="#9c9c9c"/><line x1="15" y1="490.5" x2="19" y2="490.5" stroke="#9c9c9c"/><line x1="15" y1="499.5" x2="19" y2="499.5" stroke="#9c9c9c"/><line x1="8" y1="507.5" x2="19" y2="507.5" stroke="#9c9c9c"/><line x1="15" y1="516.5" x2="19" y2="516.5" stroke="#9c9c9c"/><line x1="15" y1="525.5" x2="19" y2="525.5" stroke="#9c9c9c"/><line x1="15" y1="534.5" x2="19" y2="534.5" stroke="#9c9c9c"/><line x1="15" y1="543.5" x2="19" y2="543.5" stroke="#9c9c9c"/></svg><div style="position:absolute;left:19px;top:85px;width:3px;height:3px;background:#d0d0d0;border-radius:0px;"></div><svg style="position:absolute;left:29px;top:96px" width="18" height="18" viewBox="0 0 18 18" ><rect x="6.9" y="6.9" width="3.6" height="3.6" fill="#e0e0e0"/><path d="M2 5.6 L4.9 8.7 L2 11.8 M15.4 5.6 L12.5 8.7 L15.4 11.8 M5.6 2 L8.7 4.9 L11.8 2 M5.6 15.4 L8.7 12.5 L11.8 15.4" fill="none" stroke="#e0e0e0" stroke-width="1.7"/></svg><svg style="position:absolute;left:61px;top:96px" width="18" height="18" viewBox="0 0 18 18" ><circle cx="9" cy="9" r="7.5" fill="#e0e0e0"/><rect x="4.5" y="7.8" width="9" height="2.6" fill="#2b2b2b"/></svg><div class="t" style="left:91px;top:97px;font-size:14px;color:#ececec;transform:scaleX(0.965);transform-origin:0 0;text-shadow:0 0 1px #333">177.2 %</div><svg style="position:absolute;left:153px;top:96px" width="18" height="18" viewBox="0 0 18 18" ><circle cx="9" cy="9" r="7.5" fill="#e0e0e0"/><rect x="4.5" y="7.8" width="9" height="2.6" fill="#2b2b2b"/><rect x="7.7" y="4.5" width="2.6" height="9" fill="#2b2b2b"/></svg><div class="t" style="left:23px;top:518px;font-size:14px;color:#f0f0f0;text-shadow:1px 1px 1px #222,-1px -1px 1px #222,1px -1px 1px #222,-1px 1px 1px #222">(14, -8)</div><div style="position:absolute;left:1051px;top:89px;width:6px;height:455px;background:rgba(120,120,120,0.35);border-radius:3px;"></div><div style="position:absolute;left:1051px;top:187px;width:6px;height:131px;background:#8c8c8c;border-radius:3px;"></div><div style="position:absolute;left:23px;top:541px;width:1024px;height:6px;background:rgba(120,120,120,0.35);border-radius:3px;"></div><div style="position:absolute;left:371px;top:541px;width:299px;height:6px;background:#8c8c8c;border-radius:3px;"></div><div style="position:absolute;left:3px;top:554px;width:1057px;height:398px;background:#363d4a;border-radius:3px;"></div><div style="position:absolute;left:7px;top:560px;width:182px;height:31px;background:#252a33;border-radius:3px;"></div><div class="t" style="left:18px;top:568px;font-size:14px;color:#8f949c;">图块</div><div class="t" style="left:68px;top:568px;font-size:14px;color:#8f949c;">图案</div><div style="position:absolute;left:107px;top:560px;width:54px;height:31px;background:#363d4a;border-radius:0px;"></div><div style="position:absolute;left:107px;top:561px;width:50px;height:2px;background:#5f9ee8;border-radius:0px;"></div><div class="t" style="left:118px;top:568px;font-size:14px;color:#dcdde0;">地形</div><div style="position:absolute;left:161px;top:560px;width:28px;height:31px;background:#21262e;border-radius:3px;"></div><svg style="position:absolute;left:166px;top:566px" width="18" height="18" viewBox="0 0 18 18" ><path d="M7 2 Q9 0.5 11 2 V14 L9 17 L7 14 Z" fill="#70bdf8"/><rect x="8" y="5" width="2" height="7" fill="#21262e"/></svg><svg style="position:absolute;left:196px;top:566px" width="18" height="18" viewBox="0 0 18 18" ><path d="M3 15 L15 3" stroke="#e0e0e0" stroke-width="2"/></svg><svg style="position:absolute;left:226px;top:566px" width="18" height="18" viewBox="0 0 18 18" ><rect x="2.5" y="5" width="13" height="8" fill="none" stroke="#e0e0e0" stroke-width="2"/></svg><svg style="position:absolute;left:258px;top:566px" width="18" height="18" viewBox="0 0 18 18" ><polygon points="2.3,9.8 8,4 13.5,9.5 7.5,15.5" fill="#e0e0e0"/><path d="M3.2 5.8 A2 2 0 0 1 6.6 3.4 L8.5 6.5" fill="none" stroke="#e0e0e0" stroke-width="1.3"/><circle cx="14.6" cy="13" r="1.7" fill="#e0e0e0"/><polygon points="13.1,12.5 14.6,10 16.1,12.5" fill="#e0e0e0"/></svg><div style="position:absolute;left:286px;top:560px;width:1px;height:31px;background:#4a5161"></div><svg style="position:absolute;left:298px;top:566px" width="18" height="18" viewBox="0 0 18 18" ><rect x="6.6" y="1.8" width="4" height="6" rx="2" fill="#e0e0e0"/><rect x="5.4" y="6.3" width="6.4" height="1.8" rx="0.8" fill="#e0e0e0"/><rect x="7.2" y="8.2" width="2.8" height="6.2" fill="none" stroke="#e0e0e0" stroke-width="1.2"/><circle cx="8.6" cy="15.2" r="1.1" fill="#e0e0e0"/></svg><svg style="position:absolute;left:329px;top:566px" width="18" height="18" viewBox="0 0 18 18" ><polygon points="3.3,12 12,3.3 17.6,8.3 8.6,16.8" fill="#e0e0e0"/><polygon points="5.6,12 8.6,9.4 11.2,12.4 8.6,14.6" fill="#363d4a"/></svg><div style="position:absolute;left:358px;top:560px;width:1px;height:31px;background:#4a5161"></div><div style="position:absolute;left:371px;top:567px;width:16px;height:16px;background:#70b8f4;border-radius:3px;"></div><svg style="position:absolute;left:371px;top:567px" width="16" height="16" viewBox="0 0 16 16" ><path d="M3.5 8 L6.5 11 L12.5 5" fill="none" stroke="#ffffff" stroke-width="2"/></svg><div class="t" style="left:395px;top:568px;font-size:14px;color:#70b8f4;">连续</div><svg style="position:absolute;left:791px;top:566px" width="18" height="18" viewBox="0 0 18 18" ><path d="M9 2 L14 7 L12.6 8.4 L10 5.8 V12 H8 V5.8 L5.4 8.4 L4 7 Z" fill="#e0e0e0"/><rect x="5" y="14" width="8" height="2" fill="#e0e0e0"/></svg><svg style="position:absolute;left:822px;top:566px" width="18" height="18" viewBox="0 0 18 18" ><path d="M9 16 L14 11 L12.6 9.6 L10 12.2 V6 H8 V12.2 L5.4 9.6 L4 11 Z" fill="#e0e0e0"/><rect x="5" y="2" width="8" height="2" fill="#e0e0e0"/></svg><svg style="position:absolute;left:854px;top:566px" width="18" height="18" viewBox="0 0 18 18" ><g fill="#e0e0e0"><rect x="2" y="3" width="2.5" height="2.5"/><rect x="2" y="8" width="2.5" height="2.5"/><rect x="2" y="13" width="2.5" height="2.5"/><rect x="6.5" y="3" width="9.5" height="2.2"/><rect x="6.5" y="8" width="9.5" height="2.2"/><rect x="6.5" y="13" width="9.5" height="2.2"/></g></svg><div class="t" style="left:876px;top:568px;font-size:14px;color:#dcdde0;">选中所有层</div><div style="position:absolute;left:956px;top:560px;width:28px;height:31px;background:#21262e;border-radius:3px;"></div><svg style="position:absolute;left:961px;top:566px" width="18" height="18" viewBox="0 0 18 18" ><g fill="#70bdf8"><rect x="5" y="2" width="11" height="2"/><rect x="5" y="6" width="11" height="2"/><rect x="5" y="10" width="11" height="2"/><rect x="5" y="14" width="11" height="2"/><rect x="2" y="5" width="1.5" height="1.5"/><rect x="1" y="7" width="1.5" height="1.5"/><rect x="2" y="9" width="1.5" height="1.5"/></g></svg><div style="position:absolute;left:989px;top:560px;width:1px;height:31px;background:#4a5161"></div><div style="position:absolute;left:996px;top:560px;width:28px;height:31px;background:#21262e;border-radius:3px;"></div><svg style="position:absolute;left:1001px;top:566px" width="18" height="18" viewBox="0 0 18 18" ><rect x="2" y="2" width="14" height="14" fill="#78c0f8"/><g fill="#111"><rect x="4" y="4" width="2" height="2"/><rect x="4" y="8" width="2" height="2"/><rect x="4" y="12" width="2" height="2"/><rect x="8" y="4" width="2" height="2"/><rect x="8" y="8" width="2" height="2"/><rect x="8" y="12" width="2" height="2"/><rect x="12" y="4" width="2" height="2"/><rect x="12" y="8" width="2" height="2"/><rect x="12" y="12" width="2" height="2"/></g></svg><svg style="position:absolute;left:1033px;top:566px" width="18" height="18" viewBox="0 0 18 18" ><g fill="#e0e0e0"><rect x="3.5" y="1" width="2" height="8"/><path d="M2 9 H7 V14 Q7 16 4.5 16 Q2 16 2 14 Z"/><path d="M10 1 V5 Q10 7 12 7.5 V16 H14 V7.5 Q16 7 16 5 V1 L14.5 1 V4.5 H11.5 V1 Z"/></g></svg><div style="position:absolute;left:7px;top:595px;width:206px;height:319px;background:#252a33;border-radius:3px;"></div><div style="position:absolute;left:218px;top:595px;width:838px;height:319px;background:#252a33;border-radius:3px;"></div><svg style="position:absolute;left:11px;top:613px" width="12" height="12" viewBox="0 0 12 12" ><path d="M2.5 4 L6 7.5 L9.5 4" fill="none" stroke="#8a8f96" stroke-width="1.8"/></svg><svg style="position:absolute;left:27px;top:611px" width="16" height="16" viewBox="0 0 16 16" ><g fill="#ffc95c"><rect x="9" y="1" width="6" height="2.6"/><rect x="12.4" y="1" width="2.6" height="6"/><rect x="1" y="12.4" width="6" height="2.6"/><rect x="1" y="9" width="2.6" height="6"/></g><g fill="#6fd35a"><rect x="1" y="1" width="6" height="2.6"/><rect x="1" y="1" width="2.6" height="6"/><rect x="9" y="12.4" width="6" height="2.6"/><rect x="12.4" y="9" width="2.6" height="6"/></g></svg><div class="t" style="left:49px;top:612px;font-size:14px;color:#dcdde0;">地形集 0（仅匹配角落）</div><div style="position:absolute;left:35px;top:640px;width:175px;height:40px;background:#3d506a;border-radius:3px;"></div><div style="position:absolute;left:16px;top:640px;width:2px;height:21px;background:#9a9ea5;border-radius:0px;"></div><div style="position:absolute;left:16px;top:659px;width:19px;height:2px;background:#9a9ea5;border-radius:0px;"></div><div style="position:absolute;left:39px;top:652px;width:16px;height:16px;background:#1e1d0c;border-radius:0px;"></div><div class="t" style="left:61px;top:652px;font-size:14px;color:#e6e7ea;transform:scaleX(1.06);transform-origin:0 0;">AuotTerrain 0</div><div style="position:absolute;left:222px;top:598px;width:35px;height:43px;background:#3c5069;border-radius:2px;"></div><svg style="position:absolute;left:226px;top:605px" width="30" height="30" viewBox="0 0 30 30" ><g fill="#e0e0e0"><circle cx="15.2" cy="15" r="4"/><polygon points="15.2,1 19.3,6.2 11.1,6.2"/><rect x="13.5" y="6" width="3.4" height="4.3"/><polygon points="15.2,29 19.3,23.8 11.1,23.8"/><rect x="13.5" y="19.7" width="3.4" height="4.3"/><polygon points="1,15 6.2,10.9 6.2,19.1"/><rect x="6" y="13.3" width="4.3" height="3.4"/><polygon points="29.4,15 24.2,10.9 24.2,19.1"/><rect x="20.1" y="13.3" width="4.3" height="3.4"/><polygon points="4,4 10.5,4 8.6,5.9 10.6,7.9 7.9,10.6 5.9,8.6 4,10.5"/><polygon transform="translate(30.4,0) scale(-1,1)" points="4,4 10.5,4 8.6,5.9 10.6,7.9 7.9,10.6 5.9,8.6 4,10.5"/><polygon transform="translate(0,30) scale(1,-1)" points="4,4 10.5,4 8.6,5.9 10.6,7.9 7.9,10.6 5.9,8.6 4,10.5"/><polygon transform="translate(30.4,30) scale(-1,-1)" points="4,4 10.5,4 8.6,5.9 10.6,7.9 7.9,10.6 5.9,8.6 4,10.5"/></g></svg><svg style="position:absolute;left:263px;top:603px" width="34" height="34" viewBox="0 0 34 34" ><path d="M5.8 27 H16 V7 H26.2" fill="none" stroke="#e0e0e0" stroke-width="4"/><circle cx="5.8" cy="27" r="3.9" fill="#e0e0e0"/><circle cx="26.2" cy="6.9" r="3.9" fill="#e0e0e0"/></svg><div style="position:absolute;left:301px;top:604px;width:32px;height:32px;background:#1f1d0e;border-radius:0px;"></div><svg style="position:absolute;left:339px;top:604px" width="32" height="32" viewBox="0 0 32 32" ><rect width="32" height="32" fill="#1e1d0c"/><rect x="2" y="8" width="14" height="3" fill="#2e2812"/><rect y="13" width="32" height="9" fill="#342c13"/><rect y="22" width="32" height="6" fill="#4a3d1a"/><rect x="18" y="21" width="12" height="7" fill="#5a4a1f"/><rect y="28" width="32" height="4" fill="#6f5a26"/></svg><svg style="position:absolute;left:377px;top:604px" width="32" height="32" viewBox="0 0 32 32" ><rect width="32" height="32" fill="#1e1d0c"/><rect x="10" width="10" height="32" fill="#2c2611"/><rect x="20" width="8" height="32" fill="#4c3f1b"/><rect x="28" width="4" height="32" fill="#6f5a26"/><rect x="6" y="14" width="4" height="10" fill="#2c2611"/></svg><svg style="position:absolute;left:415px;top:604px" width="32" height="32" viewBox="0 0 32 32" ><rect width="32" height="32" fill="#1e1d0c"/><rect x="12" width="10" height="32" fill="#2c2611"/><rect x="4" width="8" height="32" fill="#4c3f1b"/><rect x="0" width="4" height="32" fill="#6f5a26"/><rect x="22" y="14" width="4" height="10" fill="#2c2611"/></svg><svg style="position:absolute;left:461px;top:616px" width="16" height="20" viewBox="0 0 16 20" ><rect width="16" height="20" fill="#1e1d0c"/><rect width="16" height="6" fill="#6f5a26"/><rect y="6" width="16" height="3" fill="#4c3f1b"/><rect y="9" width="16" height="4" fill="#342c13"/></svg><svg style="position:absolute;left:491px;top:604px" width="32" height="32" viewBox="0 0 32 32" ><defs><clipPath id="cpA"><rect width="32" height="32"/></clipPath></defs><g clip-path="url(#cpA)"><ellipse cx="31" cy="1" rx="31" ry="31" fill="#6f5a26"/><ellipse cx="31" cy="1" rx="27" ry="27" fill="#4c3f1b"/><ellipse cx="31" cy="1" rx="22" ry="22" fill="#2f2912"/><ellipse cx="31" cy="1" rx="17" ry="17" fill="#1e1d0c"/><path d="M4 32 L8 26 M2 26 L6 24" stroke="#6f5a26" stroke-width="1.5"/></g></svg><svg style="position:absolute;left:529px;top:604px" width="32" height="32" viewBox="0 0 32 32" ><defs><clipPath id="cpB"><rect width="32" height="32"/></clipPath></defs><g clip-path="url(#cpB)"><ellipse cx="1" cy="1" rx="31" ry="31" fill="#6f5a26"/><ellipse cx="1" cy="1" rx="27" ry="27" fill="#4c3f1b"/><ellipse cx="1" cy="1" rx="22" ry="22" fill="#2f2912"/><ellipse cx="1" cy="1" rx="17" ry="17" fill="#1e1d0c"/><path d="M28 32 L24 26 M30 26 L26 24" stroke="#6f5a26" stroke-width="1.5"/></g></svg><svg style="position:absolute;left:575px;top:611px" width="16" height="25" viewBox="0 0 16 25" ><defs><clipPath id="cpC"><rect y="5" width="16" height="20"/></clipPath></defs><path d="M6 6 L8.5 2 M10 5 L12 3 L11 0 M12 3 L14 2.5" stroke="#6f5a26" stroke-width="1.2" fill="none"/><g clip-path="url(#cpC)"><path d="M0 25 V5 H10 Q16 5 16 11 V25 Z" fill="#6f5a26"/><ellipse cx="5" cy="26" rx="11" ry="15" fill="#4c3f1b"/><ellipse cx="5" cy="26" rx="8" ry="11" fill="#342c13"/><ellipse cx="4" cy="26" rx="5" ry="8" fill="#1e1d0c"/></g></svg><svg style="position:absolute;left:613px;top:616px" width="16" height="20" viewBox="0 0 16 20" ><defs><clipPath id="cpD"><rect width="16" height="20"/></clipPath></defs><g clip-path="url(#cpD)"><path d="M0 20 V6 Q0 0 6 0 H16 V20 Z" fill="#6f5a26"/><ellipse cx="11" cy="21" rx="11" ry="15" fill="#4c3f1b"/><ellipse cx="11" cy="21" rx="8" ry="11" fill="#342c13"/><ellipse cx="12" cy="21" rx="5" ry="8" fill="#1e1d0c"/></g></svg><svg style="position:absolute;left:12px;top:928px" width="10" height="10" viewBox="0 0 10 10" ><circle cx="5" cy="5" r="4.2" fill="#f26b5e"/></svg><div class="t" style="left:25px;top:926px;font-size:14px;color:#dcdde0;">输出</div><div class="t" style="left:70px;top:926px;font-size:14px;color:#dcdde0;">调试器</div><div class="t" style="left:128px;top:926px;font-size:14px;color:#dcdde0;">音频</div><div class="t" style="left:171px;top:926px;font-size:14px;color:#dcdde0;">动画</div><div class="t" style="left:216px;top:926px;font-size:14px;color:#dcdde0;">着色器编辑器</div><div class="t" style="left:315px;top:926px;font-size:14px;color:#dcdde0;">TileSet</div><div class="t" style="left:375px;top:926px;font-size:14px;color:#70b8f4;transform:scaleX(1.05);transform-origin:0 0;">TileMap</div><svg style="position:absolute;left:897px;top:924px" width="18" height="18" viewBox="0 0 18 18" ><path d="M4 14 L6 7 Q7 3 10 3 Q13 3 13.5 7 L14.5 12 L16 14 Z" fill="#e0e0e0"/><circle cx="10" cy="15" r="2" fill="#e0e0e0"/></svg><div class="t" style="left:924px;top:925px;font-size:14px;color:#a3a7ad;">4.5.stable</div><svg style="position:absolute;left:1002px;top:924px" width="18" height="18" viewBox="0 0 18 18" ><g fill="#e0e0e0"><rect x="5" y="2" width="8" height="2"/><path d="M6.5 4 H11.5 V9 L13.5 11 V12 H4.5 V11 L6.5 9 Z"/><rect x="8" y="12" width="2" height="5"/></g></svg><svg style="position:absolute;left:1034px;top:924px" width="18" height="18" viewBox="0 0 18 18" ><g fill="#e0e0e0"><rect x="1.5" y="2" width="15" height="2"/><path d="M5 5 L8.5 8.5 L7.3 9.5 L5.8 8 V16 H4.2 V8 L2.7 9.5 L1.5 8.5 Z M13 5 L16.5 8.5 L15.3 9.5 L13.8 8 V16 H12.2 V8 L10.7 9.5 L9.5 8.5 Z"/></g></svg><svg style="position:absolute;left:0;top:0" width="1064" height="952"><rect x="101" y="554" width="97" height="44" fill="none" stroke="#ec1c24" stroke-width="2"/><rect x="27" y="634" width="187" height="51" fill="none" stroke="#ec1c24" stroke-width="2"/><rect x="221" y="597" width="38" height="46" fill="none" stroke="#ec1c24" stroke-width="2"/><line x1="80.5" y1="401.5" x2="119.2" y2="528.0" stroke="#ec1c24" stroke-width="3" stroke-linecap="round"/><polygon points="122.7,539.5 113.9,529.6 124.5,526.4" fill="#ec1c24"/><line x1="32" y1="812" x2="67.9" y2="717.2" stroke="#ec1c24" stroke-width="3" stroke-linecap="round"/><polygon points="72.2,706 73.1,719.2 62.8,715.3" fill="#ec1c24"/><line x1="438" y1="733" x2="277.8" y2="644.6" stroke="#ec1c24" stroke-width="3" stroke-linecap="round"/><polygon points="267.3,638.8 280.5,639.8 275.1,649.4" fill="#ec1c24"/><path d="M102.5 538.5 L108 534 V551" fill="none" stroke="#ec1c24" stroke-width="2"/><path d="M38 650 Q39 647 42.5 647 Q46.5 647 46.5 650.8 Q46.5 653.5 43 656.5 L38 661.5 H47.5" fill="none" stroke="#ec1c24" stroke-width="1.9"/><path d="M246 577 Q247.2 574.8 250 574.8 Q253.8 574.8 253.8 578.3 Q253.8 581.8 249.5 582 H248 M249.5 582 Q254.2 582.2 254.2 586 Q254.2 589.6 250 589.6 Q246.8 589.6 245.6 587.4" fill="none" stroke="#ec1c24" stroke-width="1.9"/></svg>
</body></html>
